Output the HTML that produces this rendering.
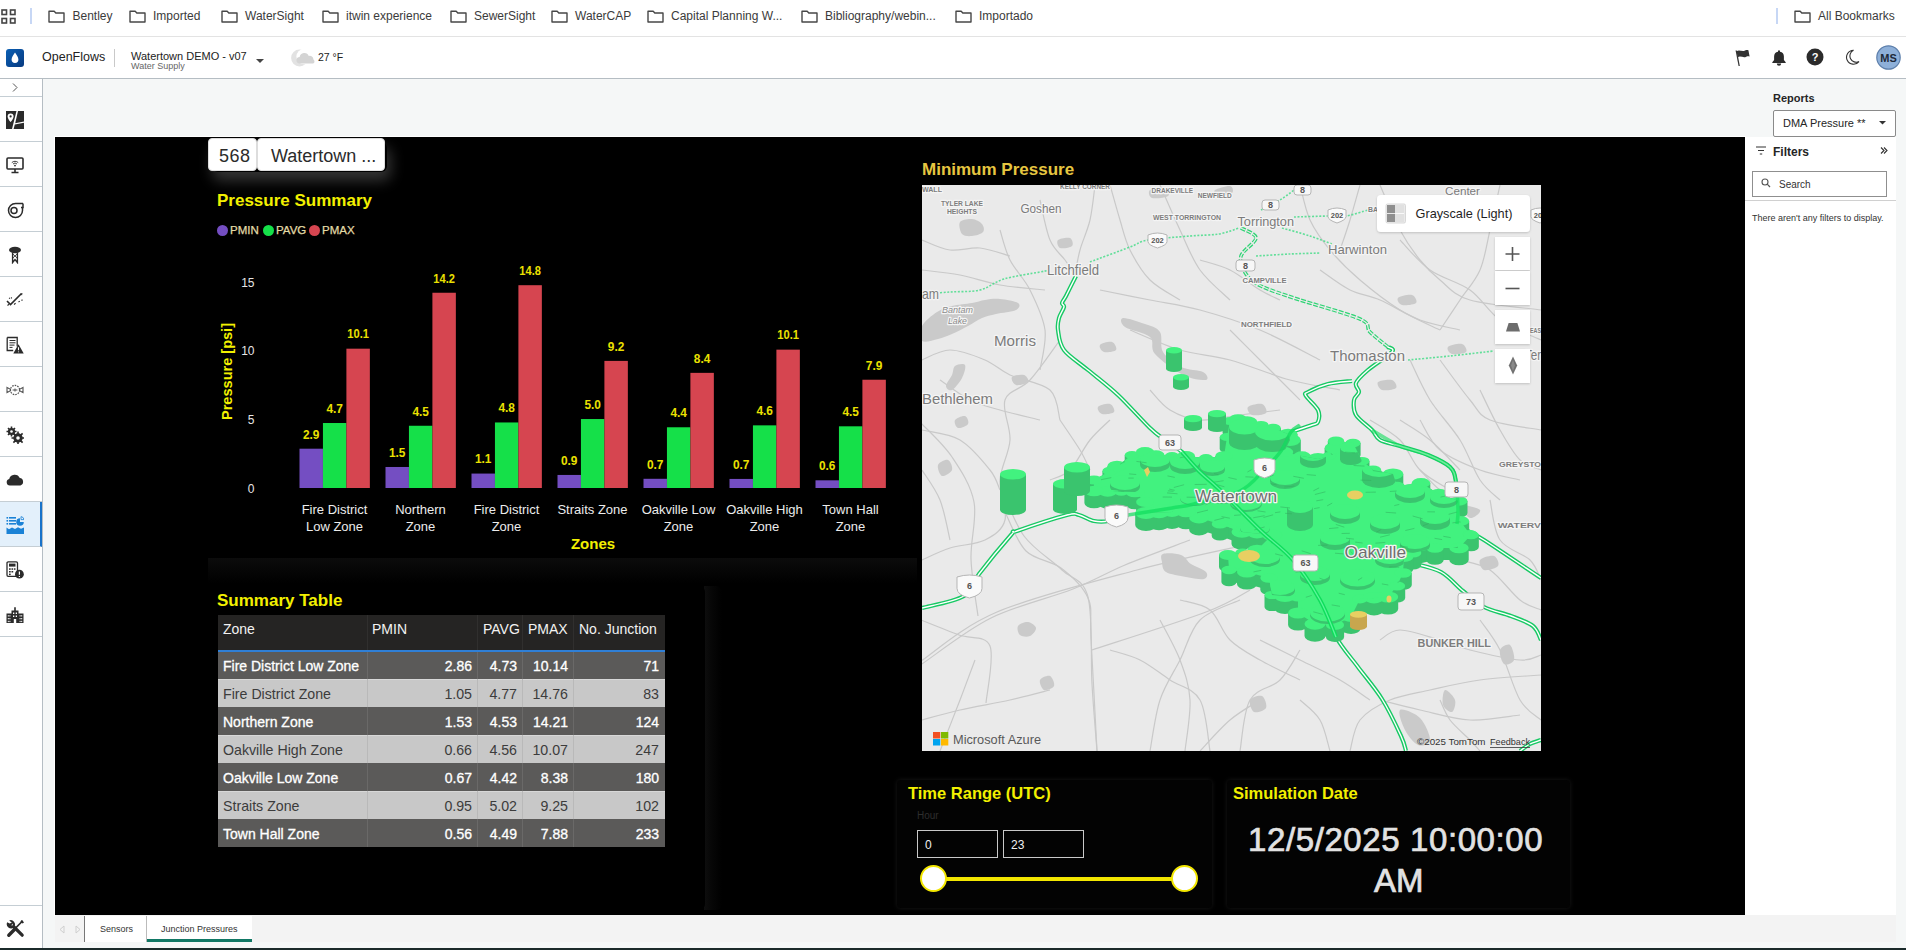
<!DOCTYPE html>
<html><head><meta charset="utf-8">
<style>
*{margin:0;padding:0;box-sizing:border-box}
html,body{width:1906px;height:950px;overflow:hidden;background:#f5f7f7;font-family:"Liberation Sans",sans-serif;position:relative}
.a{position:absolute}
.t{position:absolute;white-space:nowrap;line-height:1}
#bm{left:0;top:0;width:1906px;height:37px;background:#fff;border-bottom:1px solid #e3e3e3}
.bmi{position:absolute;top:0;height:36px;font-size:12px;color:#3b3b3b}
.bmi svg{position:absolute;left:0;top:10px}
.bmi span{position:absolute;left:24px;top:9px;white-space:nowrap}
#hdr{left:0;top:37px;width:1906px;height:42px;background:#fff;border-bottom:1px solid #b5bdc3}
#sb{left:0;top:79px;width:43px;height:871px;background:#fff;border-right:1px solid #b5bdc3}
.sbr{position:absolute;left:0;width:42px;height:45px;border-bottom:1px solid #c5ced4}
.sbr svg{position:absolute;left:6px;top:14px}
#canvas{left:55px;top:137px;width:1690px;height:778px;background:#000}
#filt{left:1745px;top:137px;width:151px;height:778px;background:#fff}
#tabs{left:55px;top:915px;width:1841px;height:27px;background:#f3f3f3}
#botbar{left:0;top:948px;width:1906px;height:2px;background:#1b2a2a}
</style></head><body>

<!-- bookmarks bar -->
<div id="bm" class="a">
  <svg class="a" style="left:1px;top:9px" width="15" height="15" viewBox="0 0 15 15"><g fill="none" stroke="#444" stroke-width="1.6"><rect x="1" y="1" width="4.5" height="4.5"/><rect x="9.5" y="1" width="4.5" height="4.5"/><rect x="1" y="9.5" width="4.5" height="4.5"/><rect x="9.5" y="9.5" width="4.5" height="4.5"/></g></svg>
  <div class="a" style="left:30px;top:8px;width:2px;height:16px;background:#c7d7f5"></div>
  <div class="bmi" style="left:48px"><svg width="17" height="13" viewBox="0 0 17 13"><path d="M1 1.2h5.2l1.6 1.8h8.2v9H1z" fill="none" stroke="#474747" stroke-width="1.4" stroke-linejoin="round"/></svg><span style="left:24.5px">Bentley</span></div>
  <div class="bmi" style="left:129px"><svg width="17" height="13" viewBox="0 0 17 13"><path d="M1 1.2h5.2l1.6 1.8h8.2v9H1z" fill="none" stroke="#474747" stroke-width="1.4" stroke-linejoin="round"/></svg><span>Imported</span></div>
  <div class="bmi" style="left:221px"><svg width="17" height="13" viewBox="0 0 17 13"><path d="M1 1.2h5.2l1.6 1.8h8.2v9H1z" fill="none" stroke="#474747" stroke-width="1.4" stroke-linejoin="round"/></svg><span>WaterSight</span></div>
  <div class="bmi" style="left:322px"><svg width="17" height="13" viewBox="0 0 17 13"><path d="M1 1.2h5.2l1.6 1.8h8.2v9H1z" fill="none" stroke="#474747" stroke-width="1.4" stroke-linejoin="round"/></svg><span>itwin experience</span></div>
  <div class="bmi" style="left:450px"><svg width="17" height="13" viewBox="0 0 17 13"><path d="M1 1.2h5.2l1.6 1.8h8.2v9H1z" fill="none" stroke="#474747" stroke-width="1.4" stroke-linejoin="round"/></svg><span>SewerSight</span></div>
  <div class="bmi" style="left:551px"><svg width="17" height="13" viewBox="0 0 17 13"><path d="M1 1.2h5.2l1.6 1.8h8.2v9H1z" fill="none" stroke="#474747" stroke-width="1.4" stroke-linejoin="round"/></svg><span>WaterCAP</span></div>
  <div class="bmi" style="left:647px"><svg width="17" height="13" viewBox="0 0 17 13"><path d="M1 1.2h5.2l1.6 1.8h8.2v9H1z" fill="none" stroke="#474747" stroke-width="1.4" stroke-linejoin="round"/></svg><span>Capital Planning W...</span></div>
  <div class="bmi" style="left:801px"><svg width="17" height="13" viewBox="0 0 17 13"><path d="M1 1.2h5.2l1.6 1.8h8.2v9H1z" fill="none" stroke="#474747" stroke-width="1.4" stroke-linejoin="round"/></svg><span>Bibliography/webin...</span></div>
  <div class="bmi" style="left:955px"><svg width="17" height="13" viewBox="0 0 17 13"><path d="M1 1.2h5.2l1.6 1.8h8.2v9H1z" fill="none" stroke="#474747" stroke-width="1.4" stroke-linejoin="round"/></svg><span>Importado</span></div>
  <div class="a" style="left:1776px;top:8px;width:2px;height:16px;background:#c7d7f5"></div>
  <div class="bmi" style="left:1794px"><svg width="17" height="13" viewBox="0 0 17 13"><path d="M1 1.2h5.2l1.6 1.8h8.2v9H1z" fill="none" stroke="#474747" stroke-width="1.4" stroke-linejoin="round"/></svg><span>All Bookmarks</span></div>
</div>

<!-- header -->
<div id="hdr" class="a"></div>
<svg class="a" style="left:6px;top:49px" width="18" height="18" viewBox="0 0 18 18"><defs><linearGradient id="lg" x1="0" y1="0" x2="1" y2="1"><stop offset="0" stop-color="#0a5fb4"/><stop offset="1" stop-color="#083a80"/></linearGradient></defs><rect width="18" height="18" rx="3" fill="url(#lg)"/><path d="M9 3.5C7.5 6 5.6 8 5.6 10.6a3.4 3.4 0 0 0 6.8 0C12.4 8 10.5 6 9 3.5z" fill="#fff"/></svg>
<div class="t" style="left:42px;top:51px;font-size:12.5px;color:#222">OpenFlows</div>
<div class="a" style="left:114px;top:49px;width:1px;height:18px;background:#c9c9c9"></div>
<div class="t" style="left:131px;top:51px;font-size:11px;color:#222">Watertown DEMO - v07</div>
<div class="t" style="left:131px;top:62px;font-size:9px;color:#666">Water Supply</div>
<svg class="a" style="left:256px;top:59px" width="8" height="5" viewBox="0 0 8 5"><path d="M0 0h8L4 4z" fill="#444"/></svg>
<svg class="a" style="left:290px;top:48px" width="26" height="20" viewBox="0 0 26 20"><circle cx="9.5" cy="10" r="8.4" fill="#e2e2e2"/><circle cx="14" cy="8.6" r="7.6" fill="#fff"/><path d="M9 15.5a3.3 3.3 0 0 1 .6-6.5a4.8 4.8 0 0 1 9.2-1a3.6 3.6 0 0 1 4.6 3.5a2.2 2.2 0 0 1-.4 4z" fill="#d4d4d4"/></svg>
<div class="t" style="left:318px;top:52px;font-size:10.5px;color:#222">27 °F</div>

<!-- sidebar -->
<div id="sb" class="a"></div>


<!-- header right icons -->
<svg class="a" style="left:1734px;top:48px" width="17" height="19" viewBox="0 0 17 19"><path d="M2.2 2.5L5.2 18" stroke="#333" stroke-width="1.3" fill="none"/><path d="M2.6 3.2C5.5 1.2 8 4.2 11 2.6c1.4-.7 2.6-.6 3.4-.4l1.2 6.2c-1.1-.3-2.2-.3-3.4.3c-3 1.6-5.6-1.4-8.6.6z" fill="#333"/></svg>
<svg class="a" style="left:1771px;top:49px" width="16" height="17" viewBox="0 0 16 17"><path d="M8 1.2a1 1 0 0 1 1 1v.5a4.8 4.8 0 0 1 3.9 4.7v3.6l1.8 2.2v.9H1.3v-.9l1.8-2.2V7.4A4.8 4.8 0 0 1 7 2.7v-.5a1 1 0 0 1 1-1z" fill="#2b2b2b"/><path d="M5.8 14.6a2.2 2.2 0 0 0 4.4 0z" fill="#2b2b2b"/></svg>
<svg class="a" style="left:1806px;top:48px" width="18" height="18" viewBox="0 0 18 18"><circle cx="9" cy="9" r="8.5" fill="#2b2b2b"/><text x="9" y="13.2" text-anchor="middle" font-family="Liberation Sans" font-weight="bold" font-size="11" fill="#fff">?</text></svg>
<svg class="a" style="left:1844px;top:49px" width="16" height="16" viewBox="0 0 16 16"><path d="M9.5 1.2A7 7 0 1 0 15 12.6A6 6 0 0 1 9.5 1.2z" fill="none" stroke="#333" stroke-width="1.1"/></svg>
<svg class="a" style="left:1876px;top:45px" width="25" height="25" viewBox="0 0 25 25"><circle cx="12.5" cy="12.5" r="11.7" fill="#8eb0d9" stroke="#5d7fab" stroke-width="1.2"/><text x="12.5" y="16.6" text-anchor="middle" font-family="Liberation Sans" font-weight="bold" font-size="11" fill="#1d2a3a">MS</text></svg>

<!-- sidebar rows -->
<div class="a" style="left:0;top:79px;width:42px;height:18px;border-bottom:1px solid #c5ced4"></div>
<svg class="a" style="left:11px;top:82px" width="8" height="11" viewBox="0 0 8 11"><path d="M2 1.5l4 4-4 4" fill="none" stroke="#555" stroke-width="1"/></svg>
<div class="sbr" style="top:97px"><svg width="18" height="18" viewBox="0 0 18 18"><path d="M0 0h10.5L6 18H0z M12 0h6v10.5L9.2 12.2z M8.8 13.5L18 11.8V18H7.6z" fill="#2b2b2b"/><path d="M4.6 2.4a3 3 0 0 1 3 3c0 2.2-3 5.6-3 5.6s-3-3.4-3-5.6a3 3 0 0 1 3-3z" fill="#fff"/><circle cx="4.6" cy="5.4" r="1.1" fill="#2b2b2b"/></svg></div>
<div class="sbr" style="top:142px"><svg width="18" height="18" viewBox="0 0 18 18"><rect x="1" y="2" width="16" height="11" rx="1" fill="none" stroke="#2b2b2b" stroke-width="1.6"/><path d="M9 13v3M5.5 16.5h7" stroke="#2b2b2b" stroke-width="1.6"/><path d="M5.8 6.6a4.6 4.6 0 0 1 6.4 0M7 8a2.8 2.8 0 0 1 4 0" fill="none" stroke="#2b2b2b" stroke-width=".9"/><circle cx="9" cy="9.6" r=".9" fill="#2b2b2b"/></svg></div>
<div class="sbr" style="top:187px"><svg width="18" height="18" viewBox="0 0 18 18"><path d="M17 2.5H9.5a7 7 0 1 0 7 7V6.5" fill="none" stroke="#2b2b2b" stroke-width="1.5"/><circle cx="8" cy="9.5" r="3" fill="none" stroke="#2b2b2b" stroke-width="1.5"/><path d="M17 2.5v4h-2" fill="none" stroke="#2b2b2b" stroke-width="1.5"/></svg></div>
<div class="sbr" style="top:232px"><svg width="18" height="18" viewBox="0 0 18 18"><ellipse cx="9" cy="4" rx="6" ry="3.2" fill="#2b2b2b"/><path d="M6.6 6.5v10l2.4-3 2.4 3v-10" fill="none" stroke="#2b2b2b" stroke-width="1.4"/><path d="M7 12l4-4M11 12L7 8" stroke="#2b2b2b" stroke-width=".8"/></svg></div>
<div class="sbr" style="top:277px"><svg width="18" height="18" viewBox="0 0 18 18"><path d="M1 10l3.5 3.5L15 3" fill="none" stroke="#2b2b2b" stroke-width="1.6"/><path d="M14 2.5l2.5-.5-.5 2.5z" fill="#2b2b2b"/><path d="M1.5 14.5l1.5-1.2M5 6.5l.8.8M8 13.5l1.6-1.2M12.5 11l1.3-.9M15.5 9.5l1-.8M3 7l1 .5" stroke="#2b2b2b" stroke-width="1.1"/></svg></div>
<div class="sbr" style="top:322px"><svg width="18" height="18" viewBox="0 0 18 18"><path d="M1.2 1.5h10v9M1.2 1.5v13h6" fill="none" stroke="#2b2b2b" stroke-width="1.3"/><path d="M3.5 4.5h6M3.5 6.8h6M3.5 9.1h5M3.5 11.4h3" stroke="#2b2b2b" stroke-width="1"/><path d="M12.5 8.3l5.2 9.2H7.3z" fill="#2b2b2b"/><path d="M12.5 11.2v3.1M12.5 15.4v.9" stroke="#fff" stroke-width="1.1"/></svg></div>
<div class="sbr" style="top:367px"><svg width="18" height="18" viewBox="0 0 18 18"><circle cx="9" cy="9" r="4.6" fill="none" stroke="#555" stroke-width="1.2" stroke-dasharray="1.6 1"/><path d="M1 6.5l3.5 1.8v1.4L1 11.5zM17 6.5l-3.5 1.8v1.4L17 11.5z" fill="none" stroke="#555" stroke-width="1.1"/><path d="M6.6 9h4.8M9 7.5v3" stroke="#555" stroke-width="1"/></svg></div>
<div class="sbr" style="top:412px"><svg width="18" height="18" viewBox="0 0 18 18"><g fill="#2b2b2b"><circle cx="5.5" cy="5.5" r="3.6"/><circle cx="12" cy="12" r="4.7"/></g><g stroke="#2b2b2b" stroke-width="1.6"><path d="M5.5 0.5v10M0.5 5.5h10M2 2l7 7M9 2l-7 7"/><path d="M12 5.5v13M5.5 12h13M7.4 7.4l9.2 9.2M16.6 7.4l-9.2 9.2"/></g><circle cx="5.5" cy="5.5" r="1.3" fill="#fff"/><circle cx="12" cy="12" r="1.8" fill="#fff"/></svg></div>
<div class="sbr" style="top:457px"><svg width="18" height="18" viewBox="0 0 18 18"><path d="M3.8 14.5a3.3 3.3 0 0 1-.6-6.5a5.6 5.6 0 0 1 10.6-.9a3.8 3.8 0 0 1 .6 7.4z" fill="#2b2b2b"/></svg></div>
<div class="sbr" style="top:502px;background:#e3f0fb;border-right:2px solid #1a73c9"><svg width="18" height="18" viewBox="0 0 18 18"><g fill="#1a82d6"><rect x="0.5" y="1" width="1.6" height="1.6"/><rect x="3" y="1" width="7" height="1.6"/><rect x="0.5" y="4" width="1.6" height="1.6"/><rect x="3" y="4" width="7" height="1.6"/><rect x="0.5" y="7" width="1.6" height="1.6"/><rect x="3" y="7" width="7" height="1.6"/><path d="M14 2.2a3.8 3.8 0 1 0 3.8 3.8H14z"/><path d="M0.5 18V11.6l2.5 1.6 3-1.6 3 1.3 3-1.7 3 1.6 3-1.2V18z"/></g><path d="M15 .6a3.5 3.5 0 0 1 3 3h-3z" fill="none" stroke="#1a82d6" stroke-width=".8"/></svg></div>
<div class="sbr" style="top:547px"><svg width="18" height="18" viewBox="0 0 18 18"><rect x="1" y="0.8" width="10.5" height="14.5" rx="1.2" fill="none" stroke="#2b2b2b" stroke-width="1.3"/><rect x="3" y="2.6" width="6.5" height="3" fill="#2b2b2b"/><g fill="#2b2b2b"><rect x="3" y="7.3" width="1.7" height="1.5"/><rect x="5.5" y="7.3" width="1.7" height="1.5"/><rect x="8" y="7.3" width="1.5" height="1.5"/><rect x="3" y="10" width="1.7" height="1.5"/><rect x="5.5" y="10" width="1.7" height="1.5"/><rect x="3" y="12.6" width="1.7" height="1.5"/></g><circle cx="13.4" cy="13.2" r="4.4" fill="#2b2b2b"/><path d="M13.4 10.6v3.2M13.4 14.9v1" stroke="#fff" stroke-width="1.2"/></svg></div>
<div class="sbr" style="top:592px"><svg width="18" height="18" viewBox="0 0 18 18"><path d="M5.5 4.5h7V17h-7zM0.5 7.5h5V17h-5zM12.5 7.5h5V17h-5zM8.2 1.2h1.6v3.3H8.2z" fill="#2b2b2b"/><g fill="#fff"><rect x="7" y="6.5" width="1.3" height="1.5"/><rect x="9.7" y="6.5" width="1.3" height="1.5"/><rect x="7" y="9.5" width="1.3" height="1.5"/><rect x="9.7" y="9.5" width="1.3" height="1.5"/><rect x="7.8" y="13" width="2.4" height="4"/><rect x="1.8" y="9.2" width="1" height="1.3"/><rect x="3.4" y="9.2" width="1" height="1.3"/><rect x="1.8" y="12" width="1" height="1.3"/><rect x="3.4" y="12" width="1" height="1.3"/><rect x="1.8" y="14.8" width="1" height="1.3"/><rect x="3.4" y="14.8" width="1" height="1.3"/><rect x="13.6" y="9.2" width="1" height="1.3"/><rect x="15.2" y="9.2" width="1" height="1.3"/><rect x="13.6" y="12" width="1" height="1.3"/><rect x="15.2" y="12" width="1" height="1.3"/><rect x="13.6" y="14.8" width="1" height="1.3"/><rect x="15.2" y="14.8" width="1" height="1.3"/></g></svg></div>
<div class="a" style="left:0;top:905px;width:42px;height:1px;background:#c5ced4"></div>
<svg class="a" style="left:6px;top:919px" width="19" height="19" viewBox="0 0 19 19"><path d="M7.5 7.5L16.2 16.2" stroke="#2b2b2b" stroke-width="3.2" stroke-linecap="round"/><path d="M1.2 3.2A4.4 4.4 0 0 0 7.8 8.6L5.6 6.4 6.4 3.6 3.6 4.4z" fill="#2b2b2b"/><path d="M3.2 1.4A4.4 4.4 0 0 1 8.6 7.6L6.6 5.6 5.6 3.6z" fill="#2b2b2b"/><path d="M16.8 1.8L10 8.6" stroke="#2b2b2b" stroke-width="1.6"/><path d="M15.6 1l2.4 2.4-1.4 1.2-2.2-2.2z" fill="#2b2b2b"/><path d="M9.2 9.8L2.8 16.2" stroke="#2b2b2b" stroke-width="3.4" stroke-linecap="round"/></svg>

<!-- reports / filters -->
<div class="t" style="left:1773px;top:93px;font-size:11px;font-weight:bold;color:#252525">Reports</div>
<div class="a" style="left:1773px;top:110px;width:123px;height:27px;background:#fff;border:1px solid #8a8a8a;border-radius:2px"></div>
<div class="t" style="left:1783px;top:118px;font-size:11px;color:#252525">DMA Pressure **</div>
<svg class="a" style="left:1879px;top:121px" width="7" height="4" viewBox="0 0 7 4"><path d="M0 0h7L3.5 3.6z" fill="#333"/></svg>

<!-- main -->
<div class="a" style="left:54px;top:136px;width:1692px;height:780px;background:#fff"></div>
<div id="canvas" class="a"></div>
<div id="filt" class="a"></div>
<div id="tabs" class="a"></div>
<!-- panels / shadows -->
<div class="a" style="left:208px;top:558px;width:709px;height:25px;background:linear-gradient(#0c0c0c,#070707 40%,#000)"></div>
<div class="a" style="left:704px;top:586px;width:18px;height:324px;border-radius:0 6px 6px 0;background:linear-gradient(to right,#0e0e0e,#070707 40%,#000)"></div><div class="a" style="left:210px;top:586px;width:495px;height:324px;border-radius:6px;background:#000"></div>
<!-- time range -->
<div class="a" style="left:897px;top:780px;width:315px;height:128px;background:#030303;border-radius:4px;box-shadow:0 0 5px rgba(30,30,30,.8)"></div>
<div class="t" style="left:908px;top:785px;font-size:16.5px;font-weight:bold;color:#f2f000">Time Range (UTC)</div>
<div class="t" style="left:917px;top:811px;font-size:10px;color:#2e2e2e">Hour</div>
<div class="a" style="left:917px;top:830px;width:81px;height:28px;border:1.5px solid #c9c9c9"></div>
<div class="a" style="left:1003px;top:830px;width:81px;height:28px;border:1.5px solid #c9c9c9"></div>
<div class="t" style="left:925px;top:839px;font-size:12px;color:#f0f0f0">0</div>
<div class="t" style="left:1011px;top:839px;font-size:12px;color:#f0f0f0">23</div>
<div class="a" style="left:934px;top:877px;width:251px;height:4px;background:#f2e600"></div>
<div class="a" style="left:920px;top:865px;width:27px;height:27px;border-radius:50%;background:#fff;border:2.5px solid #f2e600"></div>
<div class="a" style="left:1171px;top:865px;width:27px;height:27px;border-radius:50%;background:#fff;border:2.5px solid #f2e600"></div>
<!-- simulation date -->
<div class="a" style="left:1227px;top:780px;width:343px;height:128px;background:#030303;border-radius:4px;box-shadow:0 0 5px rgba(30,30,30,.8)"></div>
<div class="t" style="left:1233px;top:785px;font-size:16.5px;font-weight:bold;color:#f2f000">Simulation Date</div>
<div class="t" style="left:1248px;top:823px;font-size:33px;color:#e2e2e2;-webkit-text-stroke:0.7px #e2e2e2;letter-spacing:0.6px">12/5/2025 10:00:00</div>
<div class="t" style="left:1374px;top:864px;font-size:33px;color:#e2e2e2;-webkit-text-stroke:0.7px #e2e2e2">AM</div>
<!-- filters panel -->
<svg class="a" style="left:1756px;top:146px" width="10" height="9" viewBox="0 0 10 9"><path d="M0 1h10M2 4.5h6M3.8 8h2.4" stroke="#333" stroke-width="1.2"/></svg>
<div class="t" style="left:1773px;top:146px;font-size:12px;font-weight:bold;color:#252525">Filters</div>
<svg class="a" style="left:1880px;top:147px" width="8" height="7" viewBox="0 0 8 7"><path d="M1 .5l3 3-3 3M4 .5l3 3-3 3" fill="none" stroke="#333" stroke-width="1.1"/></svg>
<div class="a" style="left:1752px;top:171px;width:135px;height:26px;border:1px solid #8f8f8f;background:#fff"></div>
<svg class="a" style="left:1761px;top:178px" width="10" height="10" viewBox="0 0 10 10"><circle cx="4" cy="4" r="3" fill="none" stroke="#555" stroke-width="1.1"/><path d="M6.2 6.2L9 9" stroke="#555" stroke-width="1.2"/></svg>
<div class="t" style="left:1779px;top:180px;font-size:10px;color:#333">Search</div>
<div class="a" style="left:1745px;top:200px;width:151px;height:1px;background:#d0d0d0"></div>
<div class="t" style="left:1752px;top:214px;font-size:9px;color:#333">There aren't any filters to display.</div>
<!-- tabs -->
<div class="a" style="left:84px;top:916px;width:1px;height:26px;background:#777"></div>
<svg class="a" style="left:59px;top:925px" width="6" height="9" viewBox="0 0 6 9"><path d="M5 1L1 4.5 5 8z" fill="none" stroke="#cfcfcf" stroke-width="1"/></svg>
<svg class="a" style="left:75px;top:925px" width="6" height="9" viewBox="0 0 6 9"><path d="M1 1l4 3.5L1 8z" fill="none" stroke="#cfcfcf" stroke-width="1"/></svg>
<div class="a" style="left:85px;top:916px;width:61px;height:26px;background:#fff"></div>
<div class="t" style="left:100px;top:925px;font-size:9px;color:#333">Sensors</div>
<div class="a" style="left:146px;top:916px;width:1px;height:26px;background:#bbb"></div>
<div class="a" style="left:147px;top:916px;width:105px;height:26px;background:#fff;border-bottom:3px solid #117865"></div>
<div class="t" style="left:161px;top:925px;font-size:9px;color:#333">Junction Pressures</div>

<!--BEGIN TABLE-->
<!-- table -->
<div class="t" style="left:217px;top:592px;font-size:17px;font-weight:bold;color:#f2f000">Summary Table</div>
<div class="a" style="left:218px;top:615px;width:447px;height:35px;background:#252423"></div>
<div class="a" style="left:218px;top:650px;width:447px;height:2px;background:#2f7fd6"></div>
<div class="t" style="left:223px;top:622px;font-size:14px;color:#f2f2f2">Zone</div>
<div class="t" style="left:372px;top:622px;font-size:14px;color:#f2f2f2">PMIN</div>
<div class="t" style="left:483px;top:622px;font-size:14px;color:#f2f2f2">PAVG</div>
<div class="t" style="left:528px;top:622px;font-size:14px;color:#f2f2f2">PMAX</div>
<div class="t" style="left:579px;top:622px;font-size:14px;color:#f2f2f2">No. Junction</div>
<div class="a" style="left:367px;top:615px;width:1px;height:35px;background:#302f2e"></div>
<div class="a" style="left:477px;top:615px;width:1px;height:35px;background:#302f2e"></div>
<div class="a" style="left:522px;top:615px;width:1px;height:35px;background:#302f2e"></div>
<div class="a" style="left:573px;top:615px;width:1px;height:35px;background:#302f2e"></div>
<div class="a" style="left:218px;top:652px;width:447px;height:27px;background:#5b5a59;border-top:1px solid #5b5a59"></div>
<div class="a" style="left:367px;top:652px;width:1px;height:27px;background:#6a6968"></div>
<div class="a" style="left:477px;top:652px;width:1px;height:27px;background:#6a6968"></div>
<div class="a" style="left:522px;top:652px;width:1px;height:27px;background:#6a6968"></div>
<div class="a" style="left:573px;top:652px;width:1px;height:27px;background:#6a6968"></div>
<div class="t" style="left:223px;top:659.0px;font-size:14px;-webkit-text-stroke:0.3px #fff;color:#ffffff">Fire District Low Zone</div>
<div class="t" style="right:1434px;top:659.0px;font-size:14px;-webkit-text-stroke:0.3px #fff;color:#ffffff">2.86</div>
<div class="t" style="right:1389px;top:659.0px;font-size:14px;-webkit-text-stroke:0.3px #fff;color:#ffffff">4.73</div>
<div class="t" style="right:1338px;top:659.0px;font-size:14px;-webkit-text-stroke:0.3px #fff;color:#ffffff">10.14</div>
<div class="t" style="right:1247px;top:659.0px;font-size:14px;-webkit-text-stroke:0.3px #fff;color:#ffffff">71</div>
<div class="a" style="left:218px;top:679px;width:447px;height:28px;background:#c8c8c8;border-top:1px solid #d8d8d8"></div>
<div class="a" style="left:367px;top:679px;width:1px;height:28px;background:#b9b9b9"></div>
<div class="a" style="left:477px;top:679px;width:1px;height:28px;background:#b9b9b9"></div>
<div class="a" style="left:522px;top:679px;width:1px;height:28px;background:#b9b9b9"></div>
<div class="a" style="left:573px;top:679px;width:1px;height:28px;background:#b9b9b9"></div>
<div class="t" style="left:223px;top:686.5px;font-size:14.2px;color:#3c3c3c">Fire District Zone</div>
<div class="t" style="right:1434px;top:686.5px;font-size:14.2px;color:#3c3c3c">1.05</div>
<div class="t" style="right:1389px;top:686.5px;font-size:14.2px;color:#3c3c3c">4.77</div>
<div class="t" style="right:1338px;top:686.5px;font-size:14.2px;color:#3c3c3c">14.76</div>
<div class="t" style="right:1247px;top:686.5px;font-size:14.2px;color:#3c3c3c">83</div>
<div class="a" style="left:218px;top:707px;width:447px;height:28px;background:#5b5a59;border-top:1px solid #5b5a59"></div>
<div class="a" style="left:367px;top:707px;width:1px;height:28px;background:#6a6968"></div>
<div class="a" style="left:477px;top:707px;width:1px;height:28px;background:#6a6968"></div>
<div class="a" style="left:522px;top:707px;width:1px;height:28px;background:#6a6968"></div>
<div class="a" style="left:573px;top:707px;width:1px;height:28px;background:#6a6968"></div>
<div class="t" style="left:223px;top:714.5px;font-size:14px;-webkit-text-stroke:0.3px #fff;color:#ffffff">Northern Zone</div>
<div class="t" style="right:1434px;top:714.5px;font-size:14px;-webkit-text-stroke:0.3px #fff;color:#ffffff">1.53</div>
<div class="t" style="right:1389px;top:714.5px;font-size:14px;-webkit-text-stroke:0.3px #fff;color:#ffffff">4.53</div>
<div class="t" style="right:1338px;top:714.5px;font-size:14px;-webkit-text-stroke:0.3px #fff;color:#ffffff">14.21</div>
<div class="t" style="right:1247px;top:714.5px;font-size:14px;-webkit-text-stroke:0.3px #fff;color:#ffffff">124</div>
<div class="a" style="left:218px;top:735px;width:447px;height:28px;background:#c8c8c8;border-top:1px solid #d8d8d8"></div>
<div class="a" style="left:367px;top:735px;width:1px;height:28px;background:#b9b9b9"></div>
<div class="a" style="left:477px;top:735px;width:1px;height:28px;background:#b9b9b9"></div>
<div class="a" style="left:522px;top:735px;width:1px;height:28px;background:#b9b9b9"></div>
<div class="a" style="left:573px;top:735px;width:1px;height:28px;background:#b9b9b9"></div>
<div class="t" style="left:223px;top:742.5px;font-size:14.2px;color:#3c3c3c">Oakville High Zone</div>
<div class="t" style="right:1434px;top:742.5px;font-size:14.2px;color:#3c3c3c">0.66</div>
<div class="t" style="right:1389px;top:742.5px;font-size:14.2px;color:#3c3c3c">4.56</div>
<div class="t" style="right:1338px;top:742.5px;font-size:14.2px;color:#3c3c3c">10.07</div>
<div class="t" style="right:1247px;top:742.5px;font-size:14.2px;color:#3c3c3c">247</div>
<div class="a" style="left:218px;top:763px;width:447px;height:28px;background:#5b5a59;border-top:1px solid #5b5a59"></div>
<div class="a" style="left:367px;top:763px;width:1px;height:28px;background:#6a6968"></div>
<div class="a" style="left:477px;top:763px;width:1px;height:28px;background:#6a6968"></div>
<div class="a" style="left:522px;top:763px;width:1px;height:28px;background:#6a6968"></div>
<div class="a" style="left:573px;top:763px;width:1px;height:28px;background:#6a6968"></div>
<div class="t" style="left:223px;top:770.5px;font-size:14px;-webkit-text-stroke:0.3px #fff;color:#ffffff">Oakville Low Zone</div>
<div class="t" style="right:1434px;top:770.5px;font-size:14px;-webkit-text-stroke:0.3px #fff;color:#ffffff">0.67</div>
<div class="t" style="right:1389px;top:770.5px;font-size:14px;-webkit-text-stroke:0.3px #fff;color:#ffffff">4.42</div>
<div class="t" style="right:1338px;top:770.5px;font-size:14px;-webkit-text-stroke:0.3px #fff;color:#ffffff">8.38</div>
<div class="t" style="right:1247px;top:770.5px;font-size:14px;-webkit-text-stroke:0.3px #fff;color:#ffffff">180</div>
<div class="a" style="left:218px;top:791px;width:447px;height:28px;background:#c8c8c8;border-top:1px solid #d8d8d8"></div>
<div class="a" style="left:367px;top:791px;width:1px;height:28px;background:#b9b9b9"></div>
<div class="a" style="left:477px;top:791px;width:1px;height:28px;background:#b9b9b9"></div>
<div class="a" style="left:522px;top:791px;width:1px;height:28px;background:#b9b9b9"></div>
<div class="a" style="left:573px;top:791px;width:1px;height:28px;background:#b9b9b9"></div>
<div class="t" style="left:223px;top:798.5px;font-size:14.2px;color:#3c3c3c">Straits Zone</div>
<div class="t" style="right:1434px;top:798.5px;font-size:14.2px;color:#3c3c3c">0.95</div>
<div class="t" style="right:1389px;top:798.5px;font-size:14.2px;color:#3c3c3c">5.02</div>
<div class="t" style="right:1338px;top:798.5px;font-size:14.2px;color:#3c3c3c">9.25</div>
<div class="t" style="right:1247px;top:798.5px;font-size:14.2px;color:#3c3c3c">102</div>
<div class="a" style="left:218px;top:819px;width:447px;height:28px;background:#5b5a59;border-top:1px solid #5b5a59"></div>
<div class="a" style="left:367px;top:819px;width:1px;height:28px;background:#6a6968"></div>
<div class="a" style="left:477px;top:819px;width:1px;height:28px;background:#6a6968"></div>
<div class="a" style="left:522px;top:819px;width:1px;height:28px;background:#6a6968"></div>
<div class="a" style="left:573px;top:819px;width:1px;height:28px;background:#6a6968"></div>
<div class="t" style="left:223px;top:826.5px;font-size:14px;-webkit-text-stroke:0.3px #fff;color:#ffffff">Town Hall Zone</div>
<div class="t" style="right:1434px;top:826.5px;font-size:14px;-webkit-text-stroke:0.3px #fff;color:#ffffff">0.56</div>
<div class="t" style="right:1389px;top:826.5px;font-size:14px;-webkit-text-stroke:0.3px #fff;color:#ffffff">4.49</div>
<div class="t" style="right:1338px;top:826.5px;font-size:14px;-webkit-text-stroke:0.3px #fff;color:#ffffff">7.88</div>
<div class="t" style="right:1247px;top:826.5px;font-size:14px;-webkit-text-stroke:0.3px #fff;color:#ffffff">233</div>
<!--END TABLE-->
<!-- canvas items -->
<div class="a" style="left:212px;top:142px;width:175px;height:30px;border-radius:6px;box-shadow:2px 7px 14px 2px rgba(255,255,255,0.2)"></div>
<div class="a" style="left:208px;top:138px;width:49px;height:33px;background:#fff;border-radius:4px;border:1px solid #ddd"></div>
<div class="a" style="left:257px;top:138px;width:128px;height:33px;background:#fff;border-radius:4px;border:1px solid #ddd"></div>
<div class="t" style="left:219px;top:147px;font-size:18px;color:#2b2b2b;letter-spacing:0.5px">568</div>
<div class="t" style="left:271px;top:147px;font-size:18px;color:#2b2b2b">Watertown ...</div>
<div class="t" style="left:217px;top:192px;font-size:17px;font-weight:bold;color:#f2f000">Pressure Summary</div>
<div class="a" style="left:217px;top:225px;width:11px;height:11px;border-radius:50%;background:#744ec2"></div>
<div class="t" style="left:230px;top:225px;font-size:11.5px;color:#e2dba6;-webkit-text-stroke:0.25px #e2dba6">PMIN</div>
<div class="a" style="left:263px;top:225px;width:11px;height:11px;border-radius:50%;background:#15e049"></div>
<div class="t" style="left:276px;top:225px;font-size:11.5px;color:#e2dba6;-webkit-text-stroke:0.25px #e2dba6">PAVG</div>
<div class="a" style="left:309px;top:225px;width:11px;height:11px;border-radius:50%;background:#d64550"></div>
<div class="t" style="left:322px;top:225px;font-size:11.5px;color:#e2dba6;-webkit-text-stroke:0.25px #e2dba6">PMAX</div>

<!--BEGIN CHART-->
<svg class="a" style="left:0;top:0" width="1906" height="950" viewBox="0 0 1906 950" font-family="Liberation Sans">
<text x="254.5" y="286.9" text-anchor="end" font-size="12" fill="#e6e6e6">15</text>
<text x="254.5" y="354.6" text-anchor="end" font-size="12" fill="#e6e6e6">10</text>
<text x="254.5" y="423.8" text-anchor="end" font-size="12" fill="#e6e6e6">5</text>
<text x="254.5" y="492.7" text-anchor="end" font-size="12" fill="#e6e6e6">0</text>
<text transform="translate(231.5,371.5) rotate(-90)" text-anchor="middle" font-size="14.5" font-weight="bold" fill="#f2f000" textLength="97" lengthAdjust="spacingAndGlyphs">Pressure [psi]</text>
<rect x="299.50" y="448.70" width="23.45" height="39.30" fill="#744ec2"/>
<text x="311.23" y="438.50" text-anchor="middle" font-size="13" font-weight="bold" fill="#ebe100" textLength="16.5" lengthAdjust="spacingAndGlyphs">2.9</text>
<rect x="322.95" y="423.01" width="23.45" height="64.99" fill="#15e049"/>
<text x="334.68" y="412.81" text-anchor="middle" font-size="13" font-weight="bold" fill="#ebe100" textLength="16.5" lengthAdjust="spacingAndGlyphs">4.7</text>
<rect x="346.40" y="348.68" width="23.45" height="139.32" fill="#d64550"/>
<text x="358.12" y="338.48" text-anchor="middle" font-size="13" font-weight="bold" fill="#ebe100" textLength="21.6" lengthAdjust="spacingAndGlyphs">10.1</text>
<text x="334.5" y="514" text-anchor="middle" font-size="13" fill="#ececec">Fire District</text>
<text x="334.5" y="531" text-anchor="middle" font-size="13" fill="#ececec">Low Zone</text>
<rect x="385.50" y="466.98" width="23.45" height="21.02" fill="#744ec2"/>
<text x="397.23" y="456.78" text-anchor="middle" font-size="13" font-weight="bold" fill="#ebe100" textLength="16.5" lengthAdjust="spacingAndGlyphs">1.5</text>
<rect x="408.95" y="425.76" width="23.45" height="62.24" fill="#15e049"/>
<text x="420.68" y="415.56" text-anchor="middle" font-size="13" font-weight="bold" fill="#ebe100" textLength="16.5" lengthAdjust="spacingAndGlyphs">4.5</text>
<rect x="432.40" y="292.75" width="23.45" height="195.25" fill="#d64550"/>
<text x="444.12" y="282.55" text-anchor="middle" font-size="13" font-weight="bold" fill="#ebe100" textLength="21.6" lengthAdjust="spacingAndGlyphs">14.2</text>
<text x="420.5" y="514" text-anchor="middle" font-size="13" fill="#ececec">Northern</text>
<text x="420.5" y="531" text-anchor="middle" font-size="13" fill="#ececec">Zone</text>
<rect x="471.50" y="473.57" width="23.45" height="14.43" fill="#744ec2"/>
<text x="483.23" y="463.37" text-anchor="middle" font-size="13" font-weight="bold" fill="#ebe100" textLength="16.5" lengthAdjust="spacingAndGlyphs">1.1</text>
<rect x="494.95" y="422.46" width="23.45" height="65.54" fill="#15e049"/>
<text x="506.68" y="412.26" text-anchor="middle" font-size="13" font-weight="bold" fill="#ebe100" textLength="16.5" lengthAdjust="spacingAndGlyphs">4.8</text>
<rect x="518.40" y="285.20" width="23.45" height="202.80" fill="#d64550"/>
<text x="530.12" y="275.00" text-anchor="middle" font-size="13" font-weight="bold" fill="#ebe100" textLength="21.6" lengthAdjust="spacingAndGlyphs">14.8</text>
<text x="506.5" y="514" text-anchor="middle" font-size="13" fill="#ececec">Fire District</text>
<text x="506.5" y="531" text-anchor="middle" font-size="13" fill="#ececec">Zone</text>
<rect x="557.50" y="474.95" width="23.45" height="13.05" fill="#744ec2"/>
<text x="569.23" y="464.75" text-anchor="middle" font-size="13" font-weight="bold" fill="#ebe100" textLength="16.5" lengthAdjust="spacingAndGlyphs">0.9</text>
<rect x="580.95" y="419.03" width="23.45" height="68.97" fill="#15e049"/>
<text x="592.68" y="408.83" text-anchor="middle" font-size="13" font-weight="bold" fill="#ebe100" textLength="16.5" lengthAdjust="spacingAndGlyphs">5.0</text>
<rect x="604.40" y="360.90" width="23.45" height="127.10" fill="#d64550"/>
<text x="616.12" y="350.70" text-anchor="middle" font-size="13" font-weight="bold" fill="#ebe100" textLength="16.5" lengthAdjust="spacingAndGlyphs">9.2</text>
<text x="592.5" y="514" text-anchor="middle" font-size="13" fill="#ececec">Straits Zone</text>
<rect x="643.50" y="478.79" width="23.45" height="9.21" fill="#744ec2"/>
<text x="655.23" y="468.59" text-anchor="middle" font-size="13" font-weight="bold" fill="#ebe100" textLength="16.5" lengthAdjust="spacingAndGlyphs">0.7</text>
<rect x="666.95" y="427.27" width="23.45" height="60.73" fill="#15e049"/>
<text x="678.68" y="417.07" text-anchor="middle" font-size="13" font-weight="bold" fill="#ebe100" textLength="16.5" lengthAdjust="spacingAndGlyphs">4.4</text>
<rect x="690.40" y="372.86" width="23.45" height="115.14" fill="#d64550"/>
<text x="702.12" y="362.66" text-anchor="middle" font-size="13" font-weight="bold" fill="#ebe100" textLength="16.5" lengthAdjust="spacingAndGlyphs">8.4</text>
<text x="678.5" y="514" text-anchor="middle" font-size="13" fill="#ececec">Oakville Low</text>
<text x="678.5" y="531" text-anchor="middle" font-size="13" fill="#ececec">Zone</text>
<rect x="729.50" y="478.93" width="23.45" height="9.07" fill="#744ec2"/>
<text x="741.23" y="468.73" text-anchor="middle" font-size="13" font-weight="bold" fill="#ebe100" textLength="16.5" lengthAdjust="spacingAndGlyphs">0.7</text>
<rect x="752.95" y="425.35" width="23.45" height="62.65" fill="#15e049"/>
<text x="764.68" y="415.15" text-anchor="middle" font-size="13" font-weight="bold" fill="#ebe100" textLength="16.5" lengthAdjust="spacingAndGlyphs">4.6</text>
<rect x="776.40" y="349.64" width="23.45" height="138.36" fill="#d64550"/>
<text x="788.12" y="339.44" text-anchor="middle" font-size="13" font-weight="bold" fill="#ebe100" textLength="21.6" lengthAdjust="spacingAndGlyphs">10.1</text>
<text x="764.5" y="514" text-anchor="middle" font-size="13" fill="#ececec">Oakville High</text>
<text x="764.5" y="531" text-anchor="middle" font-size="13" fill="#ececec">Zone</text>
<rect x="815.50" y="480.31" width="23.45" height="7.69" fill="#744ec2"/>
<text x="827.23" y="470.11" text-anchor="middle" font-size="13" font-weight="bold" fill="#ebe100" textLength="16.5" lengthAdjust="spacingAndGlyphs">0.6</text>
<rect x="838.95" y="426.31" width="23.45" height="61.69" fill="#15e049"/>
<text x="850.68" y="416.11" text-anchor="middle" font-size="13" font-weight="bold" fill="#ebe100" textLength="16.5" lengthAdjust="spacingAndGlyphs">4.5</text>
<rect x="862.40" y="379.73" width="23.45" height="108.27" fill="#d64550"/>
<text x="874.12" y="369.53" text-anchor="middle" font-size="13" font-weight="bold" fill="#ebe100" textLength="16.5" lengthAdjust="spacingAndGlyphs">7.9</text>
<text x="850.5" y="514" text-anchor="middle" font-size="13" fill="#ececec">Town Hall</text>
<text x="850.5" y="531" text-anchor="middle" font-size="13" fill="#ececec">Zone</text>
<text x="593" y="549" text-anchor="middle" font-size="15" font-weight="bold" fill="#f2f000">Zones</text>
</svg>
<!--END CHART-->

<div id="botbar" class="a"></div>

<!--BEGIN MAP-->
<div class="t" style="left:922px;top:161px;font-size:17px;font-weight:bold;color:#e6c640">Minimum Pressure</div>
<svg class="a" style="left:922px;top:185px" width="619" height="566" viewBox="922 185 619 566" font-family="Liberation Sans">
<rect x="922" y="185" width="619" height="566" fill="#eaeaea"/>
<path d="M922.0 664.0 C933.5 656.3 965.8 630.5 991.0 618.0 C1016.2 605.5 1050.7 597.8 1073.0 589.0 C1095.3 580.2 1105.5 573.2 1125.0 565.0 C1144.5 556.8 1179.2 544.2 1190.0 540.0" fill="none" stroke="#c9c9c9" stroke-width="1.2"/>
<path d="M1005.0 512.0 C1008.5 518.5 1016.7 541.7 1026.0 551.0 C1035.3 560.3 1050.7 560.2 1061.0 568.0 C1071.3 575.8 1083.0 586.2 1088.0 598.0 C1093.0 609.8 1089.5 613.5 1091.0 639.0 C1092.5 664.5 1096.0 732.3 1097.0 751.0" fill="none" stroke="#c9c9c9" stroke-width="1.2"/>
<path d="M922.0 560.0 C926.7 558.0 939.5 551.3 950.0 548.0 C960.5 544.7 975.8 544.7 985.0 540.0 C994.2 535.3 1002.5 530.0 1005.0 520.0 C1007.5 510.0 999.2 493.3 1000.0 480.0 C1000.8 466.7 1009.2 453.3 1010.0 440.0 C1010.8 426.7 1001.7 410.0 1005.0 400.0 C1008.3 390.0 1020.8 390.0 1030.0 380.0 C1039.2 370.0 1055.0 346.7 1060.0 340.0" fill="none" stroke="#c9c9c9" stroke-width="1.2"/>
<path d="M922.0 430.0 C928.3 431.7 948.7 433.3 960.0 440.0 C971.3 446.7 983.3 461.7 990.0 470.0 C996.7 478.3 998.3 486.7 1000.0 490.0" fill="none" stroke="#c9c9c9" stroke-width="1.2"/>
<path d="M940.0 751.0 C943.3 742.5 954.2 715.2 960.0 700.0 C965.8 684.8 972.5 666.7 975.0 660.0" fill="none" stroke="#c9c9c9" stroke-width="1.2"/>
<path d="M1150.0 751.0 C1151.7 742.5 1155.0 715.2 1160.0 700.0 C1165.0 684.8 1173.3 673.3 1180.0 660.0 C1186.7 646.7 1190.0 630.0 1200.0 620.0 C1210.0 610.0 1233.3 603.3 1240.0 600.0" fill="none" stroke="#c9c9c9" stroke-width="1.2"/>
<path d="M1240.0 751.0 C1241.7 742.5 1243.3 711.8 1250.0 700.0 C1256.7 688.2 1271.7 688.3 1280.0 680.0 C1288.3 671.7 1296.7 655.0 1300.0 650.0" fill="none" stroke="#c9c9c9" stroke-width="1.2"/>
<path d="M1350.0 751.0 C1351.7 745.8 1353.3 728.5 1360.0 720.0 C1366.7 711.5 1378.3 705.0 1390.0 700.0 C1401.7 695.0 1415.0 693.3 1430.0 690.0 C1445.0 686.7 1461.5 682.5 1480.0 680.0 C1498.5 677.5 1530.8 675.8 1541.0 675.0" fill="none" stroke="#c9c9c9" stroke-width="1.2"/>
<path d="M1380.0 640.0 C1383.3 638.3 1390.0 630.0 1400.0 630.0 C1410.0 630.0 1428.3 636.7 1440.0 640.0 C1451.7 643.3 1456.7 646.7 1470.0 650.0 C1483.3 653.3 1508.2 659.2 1520.0 660.0 C1531.8 660.8 1537.5 655.8 1541.0 655.0" fill="none" stroke="#c9c9c9" stroke-width="1.2"/>
<path d="M1460.0 560.0 C1465.0 561.7 1480.0 563.3 1490.0 570.0 C1500.0 576.7 1511.5 593.3 1520.0 600.0 C1528.5 606.7 1537.5 608.3 1541.0 610.0" fill="none" stroke="#c9c9c9" stroke-width="1.2"/>
<path d="M1490.0 500.0 C1491.7 506.7 1493.3 530.0 1500.0 540.0 C1506.7 550.0 1523.2 553.3 1530.0 560.0 C1536.8 566.7 1539.2 576.7 1541.0 580.0" fill="none" stroke="#c9c9c9" stroke-width="1.2"/>
<path d="M1480.0 390.0 C1483.3 396.7 1493.3 418.3 1500.0 430.0 C1506.7 441.7 1513.2 453.3 1520.0 460.0 C1526.8 466.7 1537.5 468.3 1541.0 470.0" fill="none" stroke="#c9c9c9" stroke-width="1.2"/>
<path d="M1410.0 360.0 C1413.3 366.7 1421.7 386.7 1430.0 400.0 C1438.3 413.3 1451.7 426.7 1460.0 440.0 C1468.3 453.3 1473.3 470.0 1480.0 480.0 C1486.7 490.0 1496.7 496.7 1500.0 500.0" fill="none" stroke="#c9c9c9" stroke-width="1.2"/>
<path d="M1400.0 420.0 C1405.0 423.3 1420.0 431.7 1430.0 440.0 C1440.0 448.3 1455.0 465.0 1460.0 470.0" fill="none" stroke="#c9c9c9" stroke-width="1.2"/>
<path d="M1440.0 360.0 C1445.0 366.7 1461.7 390.0 1470.0 400.0 C1478.3 410.0 1478.2 415.0 1490.0 420.0 C1501.8 425.0 1532.5 428.3 1541.0 430.0" fill="none" stroke="#c9c9c9" stroke-width="1.2"/>
<path d="M1370.0 420.0 C1375.0 423.3 1391.7 431.7 1400.0 440.0 C1408.3 448.3 1411.7 461.7 1420.0 470.0 C1428.3 478.3 1445.0 486.7 1450.0 490.0" fill="none" stroke="#c9c9c9" stroke-width="1.2"/>
<path d="M922.0 360.0 C926.7 358.3 939.5 350.0 950.0 350.0 C960.5 350.0 975.0 355.8 985.0 360.0 C995.0 364.2 999.2 370.0 1010.0 375.0 C1020.8 380.0 1041.7 382.5 1050.0 390.0 C1058.3 397.5 1058.3 415.0 1060.0 420.0" fill="none" stroke="#c9c9c9" stroke-width="1.2"/>
<path d="M1040.0 200.0 C1041.7 206.7 1045.8 230.0 1050.0 240.0 C1054.2 250.0 1060.8 254.2 1065.0 260.0 C1069.2 265.8 1073.3 272.5 1075.0 275.0" fill="none" stroke="#c9c9c9" stroke-width="1.2"/>
<path d="M1095.0 185.0 C1094.2 190.8 1092.5 209.2 1090.0 220.0 C1087.5 230.8 1082.5 240.8 1080.0 250.0 C1077.5 259.2 1075.8 270.8 1075.0 275.0" fill="none" stroke="#c9c9c9" stroke-width="1.2"/>
<path d="M1000.0 230.0 C1001.7 235.0 1005.0 250.0 1010.0 260.0 C1015.0 270.0 1024.2 278.3 1030.0 290.0 C1035.8 301.7 1043.3 316.7 1045.0 330.0 C1046.7 343.3 1040.8 363.3 1040.0 370.0" fill="none" stroke="#c9c9c9" stroke-width="1.2"/>
<path d="M922.0 270.0 C928.3 270.8 947.0 272.5 960.0 275.0 C973.0 277.5 985.8 282.5 1000.0 285.0 C1014.2 287.5 1037.5 289.2 1045.0 290.0" fill="none" stroke="#c9c9c9" stroke-width="1.2"/>
<path d="M1100.0 290.0 C1108.3 291.7 1133.3 296.7 1150.0 300.0 C1166.7 303.3 1181.7 305.0 1200.0 310.0 C1218.3 315.0 1240.0 321.7 1260.0 330.0 C1280.0 338.3 1310.0 355.0 1320.0 360.0" fill="none" stroke="#c9c9c9" stroke-width="1.2"/>
<path d="M1130.0 330.0 C1138.3 333.3 1163.3 345.0 1180.0 350.0 C1196.7 355.0 1211.7 355.0 1230.0 360.0 C1248.3 365.0 1271.7 375.0 1290.0 380.0 C1308.3 385.0 1331.7 388.3 1340.0 390.0" fill="none" stroke="#c9c9c9" stroke-width="1.2"/>
<path d="M1200.0 260.0 C1205.0 261.7 1220.0 265.0 1230.0 270.0 C1240.0 275.0 1251.7 285.0 1260.0 290.0 C1268.3 295.0 1276.7 298.3 1280.0 300.0" fill="none" stroke="#c9c9c9" stroke-width="1.2"/>
<path d="M1300.0 185.0 C1301.7 190.8 1305.0 209.2 1310.0 220.0 C1315.0 230.8 1321.7 240.0 1330.0 250.0 C1338.3 260.0 1348.3 270.0 1360.0 280.0 C1371.7 290.0 1386.7 301.7 1400.0 310.0 C1413.3 318.3 1433.3 326.7 1440.0 330.0" fill="none" stroke="#c9c9c9" stroke-width="1.2"/>
<path d="M1400.0 240.0 C1405.0 245.0 1418.3 261.7 1430.0 270.0 C1441.7 278.3 1458.3 281.7 1470.0 290.0 C1481.7 298.3 1488.2 311.7 1500.0 320.0 C1511.8 328.3 1534.2 336.7 1541.0 340.0" fill="none" stroke="#c9c9c9" stroke-width="1.2"/>
<path d="M1150.0 390.0 C1153.3 393.3 1161.7 405.0 1170.0 410.0 C1178.3 415.0 1188.3 419.2 1200.0 420.0 C1211.7 420.8 1226.7 416.7 1240.0 415.0 C1253.3 413.3 1273.3 410.8 1280.0 410.0" fill="none" stroke="#c9c9c9" stroke-width="1.2"/>
<path d="M1420.0 470.0 C1423.3 473.3 1433.3 485.0 1440.0 490.0 C1446.7 495.0 1456.7 498.3 1460.0 500.0" fill="none" stroke="#c9c9c9" stroke-width="1.2"/>
<path d="M922.0 720.0 C928.3 718.3 945.3 713.3 960.0 710.0 C974.7 706.7 995.0 703.3 1010.0 700.0 C1025.0 696.7 1043.3 691.7 1050.0 690.0" fill="none" stroke="#c9c9c9" stroke-width="1.2"/>
<path d="M1180.0 600.0 C1185.0 601.7 1201.7 603.3 1210.0 610.0 C1218.3 616.7 1221.7 631.7 1230.0 640.0 C1238.3 648.3 1248.3 653.3 1260.0 660.0 C1271.7 666.7 1293.3 676.7 1300.0 680.0" fill="none" stroke="#c9c9c9" stroke-width="1.2"/>
<path d="M1110.0 650.0 C1115.0 651.7 1130.0 655.0 1140.0 660.0 C1150.0 665.0 1160.0 673.3 1170.0 680.0 C1180.0 686.7 1193.3 688.2 1200.0 700.0 C1206.7 711.8 1208.3 742.5 1210.0 751.0" fill="none" stroke="#c9c9c9" stroke-width="1.2"/>
<path d="M1300.0 700.0 C1303.3 703.3 1315.0 711.5 1320.0 720.0 C1325.0 728.5 1328.3 745.8 1330.0 751.0" fill="none" stroke="#c9c9c9" stroke-width="1.2"/>
<path d="M1440.0 700.0 C1441.7 703.3 1445.0 713.3 1450.0 720.0 C1455.0 726.7 1465.0 734.8 1470.0 740.0 C1475.0 745.2 1478.3 749.2 1480.0 751.0" fill="none" stroke="#c9c9c9" stroke-width="1.2"/>
<path d="M1001.0 487.0 C1004.8 495.2 1013.8 522.2 1024.0 536.0 C1034.2 549.8 1051.3 559.8 1062.0 570.0 C1072.7 580.2 1083.0 578.0 1088.0 597.0 C1093.0 616.0 1090.5 658.3 1092.0 684.0 C1093.5 709.7 1096.2 739.8 1097.0 751.0" fill="none" stroke="#c9c9c9" stroke-width="1.2"/>
<path d="M921.0 661.0 C933.7 652.8 961.0 627.2 997.0 612.0 C1033.0 596.8 1094.8 581.3 1137.0 570.0 C1179.2 558.7 1231.2 548.3 1250.0 544.0" fill="none" stroke="#c9c9c9" stroke-width="1.2"/>
<path d="M1092.0 650.0 C1111.0 643.7 1179.7 622.0 1206.0 612.0 C1232.3 602.0 1242.7 593.7 1250.0 590.0" fill="none" stroke="#c9c9c9" stroke-width="1.2"/>
<path d="M921.0 620.0 C927.3 622.5 947.5 630.7 959.0 635.0 C970.5 639.3 985.5 634.7 990.0 646.0 C994.5 657.3 986.7 693.5 986.0 703.0" fill="none" stroke="#c9c9c9" stroke-width="1.2"/>
<path d="M921.0 423.0 C926.2 428.7 943.2 443.8 952.0 457.0 C960.8 470.2 970.8 485.0 974.0 502.0 C977.2 519.0 970.3 540.0 971.0 559.0 C971.7 578.0 976.8 606.5 978.0 616.0" fill="none" stroke="#c9c9c9" stroke-width="1.2"/>
<path d="M1110.0 420.0 C1106.7 423.3 1096.7 431.7 1090.0 440.0 C1083.3 448.3 1076.7 463.3 1070.0 470.0 C1063.3 476.7 1053.3 478.3 1050.0 480.0" fill="none" stroke="#c9c9c9" stroke-width="1.2"/>
<path d="M1160.0 185.0 C1163.3 192.5 1173.3 215.8 1180.0 230.0 C1186.7 244.2 1191.7 258.3 1200.0 270.0 C1208.3 281.7 1225.0 295.0 1230.0 300.0" fill="none" stroke="#c9c9c9" stroke-width="1.2"/>
<path d="M922.0 470.0 C925.0 475.0 935.3 488.3 940.0 500.0 C944.7 511.7 948.3 533.3 950.0 540.0" fill="none" stroke="#c9c9c9" stroke-width="1.2"/>
<path d="M1500.0 185.0 C1498.3 192.5 1493.3 215.8 1490.0 230.0 C1486.7 244.2 1485.0 258.3 1480.0 270.0 C1475.0 281.7 1466.7 290.0 1460.0 300.0 C1453.3 310.0 1443.3 325.0 1440.0 330.0" fill="none" stroke="#c9c9c9" stroke-width="1.2"/>
<path d="M1380.0 185.0 C1383.3 192.5 1393.3 217.5 1400.0 230.0 C1406.7 242.5 1413.3 251.7 1420.0 260.0 C1426.7 268.3 1431.7 273.3 1440.0 280.0 C1448.3 286.7 1453.2 295.0 1470.0 300.0 C1486.8 305.0 1529.2 308.3 1541.0 310.0" fill="none" stroke="#c9c9c9" stroke-width="1.2"/>
<path d="M1230.0 330.0 C1235.0 335.0 1250.0 350.0 1260.0 360.0 C1270.0 370.0 1283.3 383.3 1290.0 390.0 C1296.7 396.7 1298.3 398.3 1300.0 400.0" fill="none" stroke="#c9c9c9" stroke-width="1.2"/>
<path d="M1160.0 620.0 C1163.3 626.7 1175.0 646.7 1180.0 660.0 C1185.0 673.3 1189.2 684.8 1190.0 700.0 C1190.8 715.2 1185.8 742.5 1185.0 751.0" fill="none" stroke="#c9c9c9" stroke-width="1.2"/>
<path d="M1260.0 640.0 C1266.7 643.3 1286.7 653.3 1300.0 660.0 C1313.3 666.7 1328.3 673.3 1340.0 680.0 C1351.7 686.7 1365.0 696.7 1370.0 700.0" fill="none" stroke="#c9c9c9" stroke-width="1.2"/>
<path d="M1480.0 620.0 C1483.3 625.0 1493.3 636.7 1500.0 650.0 C1506.7 663.3 1513.2 688.3 1520.0 700.0 C1526.8 711.7 1537.5 716.7 1541.0 720.0" fill="none" stroke="#c9c9c9" stroke-width="1.2"/>
<path d="M922.0 240.0 C926.7 241.7 940.3 248.7 950.0 250.0 C959.7 251.3 970.0 247.0 980.0 248.0 C990.0 249.0 1005.0 254.7 1010.0 256.0" fill="none" stroke="#c9c9c9" stroke-width="1.2"/>
<path d="M1110.0 185.0 C1111.7 190.8 1116.7 209.2 1120.0 220.0 C1123.3 230.8 1125.0 240.0 1130.0 250.0 C1135.0 260.0 1141.7 271.7 1150.0 280.0 C1158.3 288.3 1175.0 296.7 1180.0 300.0" fill="none" stroke="#c9c9c9" stroke-width="1.2"/>
<path d="M1320.0 270.0 C1325.0 273.3 1340.0 285.0 1350.0 290.0 C1360.0 295.0 1368.3 295.0 1380.0 300.0 C1391.7 305.0 1406.7 315.0 1420.0 320.0 C1433.3 325.0 1453.3 328.3 1460.0 330.0" fill="none" stroke="#c9c9c9" stroke-width="1.2"/>
<path d="M1360.0 185.0 C1358.3 190.8 1353.3 209.2 1350.0 220.0 C1346.7 230.8 1341.7 245.0 1340.0 250.0" fill="none" stroke="#c9c9c9" stroke-width="1.2"/>
<path d="M1060.0 420.0 C1063.3 425.0 1075.0 441.7 1080.0 450.0 C1085.0 458.3 1088.3 466.7 1090.0 470.0" fill="none" stroke="#c9c9c9" stroke-width="1.2"/>
<path d="M940.0 380.0 C945.0 383.3 960.0 395.0 970.0 400.0 C980.0 405.0 988.3 406.7 1000.0 410.0 C1011.7 413.3 1033.3 418.3 1040.0 420.0" fill="none" stroke="#c9c9c9" stroke-width="1.2"/>
<path d="M1420.0 420.0 C1423.3 425.0 1430.0 441.7 1440.0 450.0 C1450.0 458.3 1466.7 465.0 1480.0 470.0 C1493.3 475.0 1513.3 478.3 1520.0 480.0" fill="none" stroke="#c9c9c9" stroke-width="1.2"/>
<path d="M1380.0 700.0 C1386.7 701.7 1405.0 706.7 1420.0 710.0 C1435.0 713.3 1453.3 719.2 1470.0 720.0 C1486.7 720.8 1511.7 715.8 1520.0 715.0" fill="none" stroke="#c9c9c9" stroke-width="1.2"/>
<path d="M1200.0 751.0 C1205.0 745.8 1220.0 728.5 1230.0 720.0 C1240.0 711.5 1255.0 703.3 1260.0 700.0" fill="none" stroke="#c9c9c9" stroke-width="1.2"/>
<path d="M922.0 326.0 C924.5 321.2 932.0 315.3 937.0 312.0 C942.0 308.7 946.2 307.5 952.0 306.0 C957.8 304.5 966.5 304.0 972.0 303.0 C977.5 302.0 980.3 300.7 985.0 300.0 C989.7 299.3 994.5 298.5 1000.0 299.0 C1005.5 299.5 1015.3 301.2 1018.0 303.0 C1020.7 304.8 1019.7 308.2 1016.0 310.0 C1012.3 311.8 1001.7 312.7 996.0 314.0 C990.3 315.3 986.7 316.0 982.0 318.0 C977.3 320.0 973.0 323.3 968.0 326.0 C963.0 328.7 957.0 331.8 952.0 334.0 C947.0 336.2 943.0 337.8 938.0 339.0 C933.0 340.2 924.7 343.2 922.0 341.0 C919.3 338.8 919.5 330.8 922.0 326.0Z" fill="#cacaca"/>
<path d="M955.0 366.0 C957.2 364.3 963.8 363.0 965.0 365.0 C966.2 367.0 964.2 373.8 962.0 378.0 C959.8 382.2 954.7 388.7 952.0 390.0 C949.3 391.3 946.0 388.5 946.0 386.0 C946.0 383.5 950.5 378.3 952.0 375.0 C953.5 371.7 952.8 367.7 955.0 366.0Z" fill="#cacaca"/>
<path d="M960.0 222.0 C961.7 219.5 968.3 218.7 972.0 219.0 C975.7 219.3 980.2 221.8 982.0 224.0 C983.8 226.2 984.7 230.0 983.0 232.0 C981.3 234.0 975.5 235.7 972.0 236.0 C968.5 236.3 964.0 236.3 962.0 234.0 C960.0 231.7 958.3 224.5 960.0 222.0Z" fill="#cacaca"/>
<path d="M1123.0 318.0 C1126.3 317.5 1138.8 321.7 1145.0 324.0 C1151.2 326.3 1157.0 327.3 1160.0 332.0 C1163.0 336.7 1159.5 346.2 1163.0 352.0 C1166.5 357.8 1174.3 363.7 1181.0 367.0 C1187.7 370.3 1198.8 369.8 1203.0 372.0 C1207.2 374.2 1209.3 379.5 1206.0 380.0 C1202.7 380.5 1191.5 379.3 1183.0 375.0 C1174.5 370.7 1160.5 360.3 1155.0 354.0 C1149.5 347.7 1155.0 341.5 1150.0 337.0 C1145.0 332.5 1129.5 330.2 1125.0 327.0 C1120.5 323.8 1119.7 318.5 1123.0 318.0Z" fill="#cacaca"/>
<path d="M1163.0 554.0 C1166.2 552.8 1176.3 553.3 1181.0 555.0 C1185.7 556.7 1186.8 561.2 1191.0 564.0 C1195.2 566.8 1203.8 569.5 1206.0 572.0 C1208.2 574.5 1207.3 578.2 1204.0 579.0 C1200.7 579.8 1192.3 578.2 1186.0 577.0 C1179.7 575.8 1170.0 574.5 1166.0 572.0 C1162.0 569.5 1162.5 565.0 1162.0 562.0 C1161.5 559.0 1159.8 555.2 1163.0 554.0Z" fill="#cacaca"/>
<path d="M1018.0 626.0 C1019.3 623.8 1025.0 621.7 1028.0 622.0 C1031.0 622.3 1035.7 625.7 1036.0 628.0 C1036.3 630.3 1032.7 634.8 1030.0 636.0 C1027.3 637.2 1022.0 636.7 1020.0 635.0 C1018.0 633.3 1016.7 628.2 1018.0 626.0Z" fill="#cacaca"/>
<path d="M1500.0 318.0 C1502.0 317.0 1515.7 320.0 1520.0 322.0 C1524.3 324.0 1528.0 329.0 1526.0 330.0 C1524.0 331.0 1512.3 330.0 1508.0 328.0 C1503.7 326.0 1498.0 319.0 1500.0 318.0Z" fill="#cacaca"/>
<path d="M1400.0 710.0 C1402.5 708.0 1415.0 713.0 1420.0 718.0 C1425.0 723.0 1430.3 735.5 1430.0 740.0 C1429.7 744.5 1422.2 746.7 1418.0 745.0 C1413.8 743.3 1408.0 735.8 1405.0 730.0 C1402.0 724.2 1397.5 712.0 1400.0 710.0Z" fill="#cacaca"/>
<path d="M1445.0 690.0 C1447.0 689.2 1453.8 696.3 1455.0 700.0 C1456.2 703.7 1454.0 711.2 1452.0 712.0 C1450.0 712.8 1444.2 708.7 1443.0 705.0 C1441.8 701.3 1443.0 690.8 1445.0 690.0Z" fill="#cacaca"/>
<path d="M1460.0 505.0 C1461.7 503.7 1478.3 507.8 1480.0 510.0 C1481.7 512.2 1473.3 518.8 1470.0 518.0 C1466.7 517.2 1458.3 506.3 1460.0 505.0Z" fill="#cacaca"/>
<path d="M1012.0 377.0 C1013.3 375.3 1021.3 374.2 1024.0 375.0 C1026.7 375.8 1029.3 380.3 1028.0 382.0 C1026.7 383.7 1018.7 385.8 1016.0 385.0 C1013.3 384.2 1010.7 378.7 1012.0 377.0Z" fill="#cacaca"/>
<path d="M1098.0 407.0 C1099.3 405.3 1107.3 403.2 1110.0 404.0 C1112.7 404.8 1115.3 410.3 1114.0 412.0 C1112.7 413.7 1104.7 414.8 1102.0 414.0 C1099.3 413.2 1096.7 408.7 1098.0 407.0Z" fill="#cacaca"/>
<path d="M1248.0 407.0 C1249.7 405.2 1259.0 403.0 1262.0 404.0 C1265.0 405.0 1267.7 411.2 1266.0 413.0 C1264.3 414.8 1255.0 416.0 1252.0 415.0 C1249.0 414.0 1246.3 408.8 1248.0 407.0Z" fill="#cacaca"/>
<path d="M1448.0 347.0 C1449.7 345.3 1459.0 343.2 1462.0 344.0 C1465.0 344.8 1467.7 350.3 1466.0 352.0 C1464.3 353.7 1455.0 354.8 1452.0 354.0 C1449.0 353.2 1446.3 348.7 1448.0 347.0Z" fill="#cacaca"/>
<path d="M1398.0 298.0 C1399.7 296.3 1409.0 294.2 1412.0 295.0 C1415.0 295.8 1417.7 301.3 1416.0 303.0 C1414.3 304.7 1405.0 305.8 1402.0 305.0 C1399.0 304.2 1396.3 299.7 1398.0 298.0Z" fill="#cacaca"/>
<path d="M1378.0 382.0 C1379.7 380.3 1389.0 379.0 1392.0 380.0 C1395.0 381.0 1397.7 386.3 1396.0 388.0 C1394.3 389.7 1385.0 391.0 1382.0 390.0 C1379.0 389.0 1376.3 383.7 1378.0 382.0Z" fill="#cacaca"/>
<path d="M1215.0 190.0 C1217.0 188.5 1227.2 185.5 1230.0 186.0 C1232.8 186.5 1234.0 191.5 1232.0 193.0 C1230.0 194.5 1220.8 195.5 1218.0 195.0 C1215.2 194.5 1213.0 191.5 1215.0 190.0Z" fill="#cacaca"/>
<path d="M938.0 465.0 C939.0 462.3 945.7 459.2 948.0 460.0 C950.3 460.8 953.0 467.3 952.0 470.0 C951.0 472.7 944.3 476.8 942.0 476.0 C939.7 475.2 937.0 467.7 938.0 465.0Z" fill="#cacaca"/>
<path d="M955.0 420.0 C956.2 418.0 962.8 415.3 965.0 416.0 C967.2 416.7 969.2 422.0 968.0 424.0 C966.8 426.0 960.2 428.7 958.0 428.0 C955.8 427.3 953.8 422.0 955.0 420.0Z" fill="#cacaca"/>
<path d="M1100.0 345.0 C1101.3 343.3 1109.3 341.2 1112.0 342.0 C1114.7 342.8 1117.3 348.3 1116.0 350.0 C1114.7 351.7 1106.7 352.8 1104.0 352.0 C1101.3 351.2 1098.7 346.7 1100.0 345.0Z" fill="#cacaca"/>
<path d="M1150.0 190.0 C1152.2 188.3 1162.0 187.0 1165.0 188.0 C1168.0 189.0 1170.2 194.3 1168.0 196.0 C1165.8 197.7 1155.0 199.0 1152.0 198.0 C1149.0 197.0 1147.8 191.7 1150.0 190.0Z" fill="#cacaca"/>
<path d="M1058.0 240.0 C1059.7 238.3 1067.7 237.0 1070.0 238.0 C1072.3 239.0 1073.7 244.3 1072.0 246.0 C1070.3 247.7 1062.3 249.0 1060.0 248.0 C1057.7 247.0 1056.3 241.7 1058.0 240.0Z" fill="#cacaca"/>
<path d="M1480.0 560.0 C1481.7 557.7 1491.0 555.0 1494.0 556.0 C1497.0 557.0 1499.7 563.7 1498.0 566.0 C1496.3 568.3 1487.0 571.0 1484.0 570.0 C1481.0 569.0 1478.3 562.3 1480.0 560.0Z" fill="#cacaca"/>
<path d="M1500.0 650.0 C1501.0 646.8 1507.7 643.3 1510.0 645.0 C1512.3 646.7 1515.0 656.8 1514.0 660.0 C1513.0 663.2 1506.3 665.7 1504.0 664.0 C1501.7 662.3 1499.0 653.2 1500.0 650.0Z" fill="#cacaca"/>
<path d="M1250.0 700.0 C1251.3 697.3 1259.3 694.7 1262.0 696.0 C1264.7 697.3 1267.3 705.3 1266.0 708.0 C1264.7 710.7 1256.7 713.3 1254.0 712.0 C1251.3 710.7 1248.7 702.7 1250.0 700.0Z" fill="#cacaca"/>
<path d="M1040.0 680.0 C1041.0 677.7 1047.7 675.0 1050.0 676.0 C1052.3 677.0 1055.0 683.7 1054.0 686.0 C1053.0 688.3 1046.3 691.0 1044.0 690.0 C1041.7 689.0 1039.0 682.3 1040.0 680.0Z" fill="#cacaca"/>
<path d="M1076.0 276.0 C1074.3 279.3 1068.3 291.5 1066.0 296.0 C1063.7 300.5 1062.3 301.2 1062.0 303.0 C1061.7 304.8 1064.5 304.5 1064.0 307.0 C1063.5 309.5 1060.0 314.2 1059.0 318.0 C1058.0 321.8 1057.2 324.7 1058.0 330.0 C1058.8 335.3 1059.0 343.3 1064.0 350.0 C1069.0 356.7 1079.0 362.5 1088.0 370.0 C1097.0 377.5 1107.7 385.3 1118.0 395.0 C1128.3 404.7 1142.2 420.5 1150.0 428.0 C1157.8 435.5 1159.7 436.0 1165.0 440.0 C1170.3 444.0 1176.3 446.8 1182.0 452.0 C1187.7 457.2 1192.8 464.8 1199.0 471.0 C1205.2 477.2 1208.8 479.2 1219.0 489.0 C1229.2 498.8 1247.7 518.2 1260.0 530.0 C1272.3 541.8 1283.0 548.3 1293.0 560.0 C1303.0 571.7 1312.8 587.2 1320.0 600.0 C1327.2 612.8 1329.7 625.8 1336.0 637.0 C1342.3 648.2 1350.3 656.7 1358.0 667.0 C1365.7 677.3 1374.8 687.5 1382.0 699.0 C1389.2 710.5 1397.0 727.3 1401.0 736.0 C1405.0 744.7 1405.2 748.5 1406.0 751.0" fill="none" stroke="#17c964" stroke-width="4.2" stroke-linejoin="round"/><path d="M1076.0 276.0 C1074.3 279.3 1068.3 291.5 1066.0 296.0 C1063.7 300.5 1062.3 301.2 1062.0 303.0 C1061.7 304.8 1064.5 304.5 1064.0 307.0 C1063.5 309.5 1060.0 314.2 1059.0 318.0 C1058.0 321.8 1057.2 324.7 1058.0 330.0 C1058.8 335.3 1059.0 343.3 1064.0 350.0 C1069.0 356.7 1079.0 362.5 1088.0 370.0 C1097.0 377.5 1107.7 385.3 1118.0 395.0 C1128.3 404.7 1142.2 420.5 1150.0 428.0 C1157.8 435.5 1159.7 436.0 1165.0 440.0 C1170.3 444.0 1176.3 446.8 1182.0 452.0 C1187.7 457.2 1192.8 464.8 1199.0 471.0 C1205.2 477.2 1208.8 479.2 1219.0 489.0 C1229.2 498.8 1247.7 518.2 1260.0 530.0 C1272.3 541.8 1283.0 548.3 1293.0 560.0 C1303.0 571.7 1312.8 587.2 1320.0 600.0 C1327.2 612.8 1329.7 625.8 1336.0 637.0 C1342.3 648.2 1350.3 656.7 1358.0 667.0 C1365.7 677.3 1374.8 687.5 1382.0 699.0 C1389.2 710.5 1397.0 727.3 1401.0 736.0 C1405.0 744.7 1405.2 748.5 1406.0 751.0" fill="none" stroke="#ffffff" stroke-width="1.39" stroke-linejoin="round"/>
<path d="M922.0 608.0 C929.0 606.0 954.5 601.7 964.0 596.0 C973.5 590.3 971.2 584.2 979.0 574.0 C986.8 563.8 1004.7 542.2 1011.0 535.0 C1017.3 527.8 1007.7 534.3 1017.0 531.0 C1026.3 527.7 1056.7 517.7 1067.0 515.0 C1077.3 512.3 1074.5 514.0 1079.0 515.0 C1083.5 516.0 1089.0 520.0 1094.0 521.0 C1099.0 522.0 1103.3 522.0 1109.0 521.0 C1114.7 520.0 1124.8 516.0 1128.0 515.0" fill="none" stroke="#17c964" stroke-width="4.2" stroke-linejoin="round"/><path d="M922.0 608.0 C929.0 606.0 954.5 601.7 964.0 596.0 C973.5 590.3 971.2 584.2 979.0 574.0 C986.8 563.8 1004.7 542.2 1011.0 535.0 C1017.3 527.8 1007.7 534.3 1017.0 531.0 C1026.3 527.7 1056.7 517.7 1067.0 515.0 C1077.3 512.3 1074.5 514.0 1079.0 515.0 C1083.5 516.0 1089.0 520.0 1094.0 521.0 C1099.0 522.0 1103.3 522.0 1109.0 521.0 C1114.7 520.0 1124.8 516.0 1128.0 515.0" fill="none" stroke="#ffffff" stroke-width="1.39" stroke-linejoin="round"/>
<path d="M1291.0 432.0 C1294.5 430.8 1307.5 426.7 1312.0 425.0 C1316.5 423.3 1317.0 424.5 1318.0 422.0 C1319.0 419.5 1320.0 414.3 1318.0 410.0 C1316.0 405.7 1307.7 399.0 1306.0 396.0 C1304.3 393.0 1304.3 394.0 1308.0 392.0 C1311.7 390.0 1320.7 385.8 1328.0 384.0 C1335.3 382.2 1348.0 381.5 1352.0 381.0" fill="none" stroke="#17c964" stroke-width="4.2" stroke-linejoin="round"/><path d="M1291.0 432.0 C1294.5 430.8 1307.5 426.7 1312.0 425.0 C1316.5 423.3 1317.0 424.5 1318.0 422.0 C1319.0 419.5 1320.0 414.3 1318.0 410.0 C1316.0 405.7 1307.7 399.0 1306.0 396.0 C1304.3 393.0 1304.3 394.0 1308.0 392.0 C1311.7 390.0 1320.7 385.8 1328.0 384.0 C1335.3 382.2 1348.0 381.5 1352.0 381.0" fill="none" stroke="#ffffff" stroke-width="1.39" stroke-linejoin="round"/>
<path d="M1388.0 347.0 C1388.7 347.8 1395.3 348.2 1392.0 352.0 C1388.7 355.8 1374.0 364.8 1368.0 370.0 C1362.0 375.2 1357.5 379.3 1356.0 383.0 C1354.5 386.7 1359.3 389.2 1359.0 392.0 C1358.7 394.8 1354.5 396.2 1354.0 400.0 C1353.5 403.8 1353.0 410.0 1356.0 415.0 C1359.0 420.0 1368.0 425.8 1372.0 430.0 C1376.0 434.2 1375.3 437.3 1380.0 440.0 C1384.7 442.7 1392.0 443.5 1400.0 446.0 C1408.0 448.5 1419.7 451.5 1428.0 455.0 C1436.3 458.5 1445.3 462.5 1450.0 467.0 C1454.7 471.5 1454.7 474.8 1456.0 482.0 C1457.3 489.2 1457.8 503.0 1458.0 510.0 C1458.2 517.0 1452.7 519.0 1457.0 524.0 C1461.3 529.0 1470.0 531.0 1484.0 540.0 C1498.0 549.0 1531.5 571.7 1541.0 578.0" fill="none" stroke="#17c964" stroke-width="4.2" stroke-linejoin="round"/><path d="M1388.0 347.0 C1388.7 347.8 1395.3 348.2 1392.0 352.0 C1388.7 355.8 1374.0 364.8 1368.0 370.0 C1362.0 375.2 1357.5 379.3 1356.0 383.0 C1354.5 386.7 1359.3 389.2 1359.0 392.0 C1358.7 394.8 1354.5 396.2 1354.0 400.0 C1353.5 403.8 1353.0 410.0 1356.0 415.0 C1359.0 420.0 1368.0 425.8 1372.0 430.0 C1376.0 434.2 1375.3 437.3 1380.0 440.0 C1384.7 442.7 1392.0 443.5 1400.0 446.0 C1408.0 448.5 1419.7 451.5 1428.0 455.0 C1436.3 458.5 1445.3 462.5 1450.0 467.0 C1454.7 471.5 1454.7 474.8 1456.0 482.0 C1457.3 489.2 1457.8 503.0 1458.0 510.0 C1458.2 517.0 1452.7 519.0 1457.0 524.0 C1461.3 529.0 1470.0 531.0 1484.0 540.0 C1498.0 549.0 1531.5 571.7 1541.0 578.0" fill="none" stroke="#ffffff" stroke-width="1.39" stroke-linejoin="round"/>
<path d="M1412.0 563.0 C1416.8 564.5 1432.5 567.3 1441.0 572.0 C1449.5 576.7 1455.8 585.2 1463.0 591.0 C1470.2 596.8 1476.0 602.8 1484.0 607.0 C1492.0 611.2 1502.8 612.8 1511.0 616.0 C1519.2 619.2 1528.0 622.0 1533.0 626.0 C1538.0 630.0 1539.7 637.7 1541.0 640.0" fill="none" stroke="#17c964" stroke-width="4.2" stroke-linejoin="round"/><path d="M1412.0 563.0 C1416.8 564.5 1432.5 567.3 1441.0 572.0 C1449.5 576.7 1455.8 585.2 1463.0 591.0 C1470.2 596.8 1476.0 602.8 1484.0 607.0 C1492.0 611.2 1502.8 612.8 1511.0 616.0 C1519.2 619.2 1528.0 622.0 1533.0 626.0 C1538.0 630.0 1539.7 637.7 1541.0 640.0" fill="none" stroke="#ffffff" stroke-width="1.39" stroke-linejoin="round"/>
<path d="M1520.0 751.0 C1521.7 749.8 1526.5 745.8 1530.0 744.0 C1533.5 742.2 1539.2 740.7 1541.0 740.0" fill="none" stroke="#17c964" stroke-width="4.2" stroke-linejoin="round"/><path d="M1520.0 751.0 C1521.7 749.8 1526.5 745.8 1530.0 744.0 C1533.5 742.2 1539.2 740.7 1541.0 740.0" fill="none" stroke="#ffffff" stroke-width="1.39" stroke-linejoin="round"/>
<path d="M922.0 294.0 C926.7 293.7 940.3 292.7 950.0 292.0 C959.7 291.3 971.0 292.2 980.0 290.0 C989.0 287.8 994.0 282.0 1004.0 279.0 C1014.0 276.0 1032.3 273.5 1040.0 272.0 C1047.7 270.5 1048.3 270.3 1050.0 270.0" fill="none" stroke="#3fdc84" stroke-width="1.6" stroke-dasharray="2 1.6" opacity="0.8"/>
<path d="M1090.0 262.0 C1096.7 259.5 1120.3 250.7 1130.0 247.0 C1139.7 243.3 1138.0 241.8 1148.0 240.0 C1158.0 238.2 1178.2 237.0 1190.0 236.0 C1201.8 235.0 1210.8 235.3 1219.0 234.0 C1227.2 232.7 1235.7 229.0 1239.0 228.0" fill="none" stroke="#3fdc84" stroke-width="1.6" stroke-dasharray="2 1.6" opacity="0.8"/>
<path d="M1282.0 228.0 C1286.7 229.3 1301.7 233.3 1310.0 236.0 C1318.3 238.7 1328.3 242.7 1332.0 244.0" fill="none" stroke="#3fdc84" stroke-width="1.6" stroke-dasharray="2 1.6" opacity="0.8"/>
<path d="M1294.0 217.0 C1299.7 216.8 1319.3 216.2 1328.0 216.0 C1336.7 215.8 1339.3 217.0 1346.0 216.0 C1352.7 215.0 1364.3 211.0 1368.0 210.0" fill="none" stroke="#3fdc84" stroke-width="1.6" stroke-dasharray="2 1.6" opacity="0.8"/>
<path d="M1256.0 256.0 C1261.7 255.7 1279.3 254.5 1290.0 254.0 C1300.7 253.5 1315.0 253.2 1320.0 253.0" fill="none" stroke="#3fdc84" stroke-width="1.6" stroke-dasharray="2 1.6" opacity="0.8"/>
<path d="M1261.0 210.0 C1264.2 208.3 1274.5 203.3 1280.0 200.0 C1285.5 196.7 1291.7 191.7 1294.0 190.0" fill="none" stroke="#3fdc84" stroke-width="1.6" stroke-dasharray="2 1.6" opacity="0.8"/>
<path d="M1408.0 360.0 C1415.0 359.3 1435.7 357.5 1450.0 356.0 C1464.3 354.5 1486.7 351.8 1494.0 351.0" fill="none" stroke="#3fdc84" stroke-width="1.6" stroke-dasharray="2 1.6" opacity="0.8"/>
<path d="M1241.0 228.0 C1243.5 229.7 1256.0 233.3 1256.0 238.0 C1256.0 242.7 1242.7 250.0 1241.0 256.0 C1239.3 262.0 1242.7 269.0 1246.0 274.0 C1249.3 279.0 1252.5 281.8 1261.0 286.0 C1269.5 290.2 1280.5 293.5 1297.0 299.0 C1313.5 304.5 1347.8 313.5 1360.0 319.0 C1372.2 324.5 1365.3 327.3 1370.0 332.0 C1374.7 336.7 1385.0 344.5 1388.0 347.0" fill="none" stroke="#2fd475" stroke-width="3.6" stroke-dasharray="5 1.5"/>
<path d="M1241.0 228.0 C1243.5 229.7 1256.0 233.3 1256.0 238.0 C1256.0 242.7 1242.7 250.0 1241.0 256.0 C1239.3 262.0 1242.7 269.0 1246.0 274.0 C1249.3 279.0 1252.5 281.8 1261.0 286.0 C1269.5 290.2 1280.5 293.5 1297.0 299.0 C1313.5 304.5 1347.8 313.5 1360.0 319.0 C1372.2 324.5 1365.3 327.3 1370.0 332.0 C1374.7 336.7 1385.0 344.5 1388.0 347.0" fill="none" stroke="#eaeaea" stroke-width="1.2"/>
<path d="M1094.0 480.0 L1110.0 471.0 L1117.0 466.0 L1132.0 455.0 L1145.0 452.0 L1156.0 455.0 L1172.0 456.0 L1186.0 456.0 L1206.0 458.0 L1224.0 456.0 L1227.0 437.0 L1230.0 421.0 L1238.0 419.0 L1247.0 422.0 L1261.0 425.0 L1273.0 428.0 L1288.0 434.0 L1290.0 440.0 L1284.0 452.0 L1302.0 456.0 L1318.0 459.0 L1329.0 456.0 L1335.0 448.0 L1336.0 441.0 L1353.0 443.0 L1362.0 461.0 L1373.0 470.0 L1393.0 474.0 L1397.0 486.0 L1421.0 483.0 L1439.0 494.0 L1459.0 501.0 L1460.0 521.0 L1470.0 534.0 L1471.0 535.0 L1471.0 535.0 L1459.0 548.0 L1435.0 548.0 L1413.0 553.0 L1404.0 557.0 L1403.0 573.0 L1397.0 586.0 L1388.0 597.0 L1360.0 599.0 L1351.0 617.0 L1335.0 625.0 L1315.0 624.0 L1298.0 613.0 L1298.0 597.0 L1272.0 595.0 L1269.0 578.0 L1247.0 572.0 L1229.0 570.0 L1228.0 555.0 L1257.0 550.0 L1272.0 535.0 L1242.0 532.0 L1220.0 524.0 L1199.0 518.0 L1186.0 512.0 L1178.0 505.0 L1172.0 512.0 L1146.0 513.0 L1145.0 502.0 L1135.0 492.0 L1094.0 491.0Z" fill="#3ac46e"/>
<path d="M1094.0 483.0 L1110.0 474.0 L1117.0 469.0 L1132.0 458.0 L1145.0 455.0 L1156.0 458.0 L1172.0 459.0 L1186.0 459.0 L1206.0 461.0 L1224.0 459.0 L1227.0 440.0 L1230.0 424.0 L1238.0 422.0 L1247.0 425.0 L1261.0 428.0 L1273.0 431.0 L1288.0 437.0 L1290.0 443.0 L1284.0 455.0 L1302.0 459.0 L1318.0 462.0 L1329.0 459.0 L1335.0 451.0 L1336.0 444.0 L1353.0 446.0 L1362.0 464.0 L1373.0 473.0 L1393.0 477.0 L1397.0 489.0 L1421.0 486.0 L1439.0 497.0 L1459.0 504.0 L1460.0 524.0 L1470.0 537.0 L1471.0 538.0 L1471.0 538.0 L1459.0 551.0 L1435.0 551.0 L1413.0 556.0 L1404.0 560.0 L1403.0 576.0 L1397.0 589.0 L1388.0 600.0 L1360.0 602.0 L1351.0 620.0 L1335.0 628.0 L1315.0 627.0 L1298.0 616.0 L1298.0 600.0 L1272.0 598.0 L1269.0 581.0 L1247.0 575.0 L1229.0 573.0 L1228.0 558.0 L1257.0 553.0 L1272.0 538.0 L1242.0 535.0 L1220.0 527.0 L1199.0 521.0 L1186.0 515.0 L1178.0 508.0 L1172.0 515.0 L1146.0 516.0 L1145.0 505.0 L1135.0 495.0 L1094.0 494.0Z" fill="#3ac46e"/>
<path d="M1094.0 486.0 L1110.0 477.0 L1117.0 472.0 L1132.0 461.0 L1145.0 458.0 L1156.0 461.0 L1172.0 462.0 L1186.0 462.0 L1206.0 464.0 L1224.0 462.0 L1227.0 443.0 L1230.0 427.0 L1238.0 425.0 L1247.0 428.0 L1261.0 431.0 L1273.0 434.0 L1288.0 440.0 L1290.0 446.0 L1284.0 458.0 L1302.0 462.0 L1318.0 465.0 L1329.0 462.0 L1335.0 454.0 L1336.0 447.0 L1353.0 449.0 L1362.0 467.0 L1373.0 476.0 L1393.0 480.0 L1397.0 492.0 L1421.0 489.0 L1439.0 500.0 L1459.0 507.0 L1460.0 527.0 L1470.0 540.0 L1471.0 541.0 L1471.0 541.0 L1459.0 554.0 L1435.0 554.0 L1413.0 559.0 L1404.0 563.0 L1403.0 579.0 L1397.0 592.0 L1388.0 603.0 L1360.0 605.0 L1351.0 623.0 L1335.0 631.0 L1315.0 630.0 L1298.0 619.0 L1298.0 603.0 L1272.0 601.0 L1269.0 584.0 L1247.0 578.0 L1229.0 576.0 L1228.0 561.0 L1257.0 556.0 L1272.0 541.0 L1242.0 538.0 L1220.0 530.0 L1199.0 524.0 L1186.0 518.0 L1178.0 511.0 L1172.0 518.0 L1146.0 519.0 L1145.0 508.0 L1135.0 498.0 L1094.0 497.0Z" fill="#3ac46e"/>
<path d="M1094.0 489.0 L1110.0 480.0 L1117.0 475.0 L1132.0 464.0 L1145.0 461.0 L1156.0 464.0 L1172.0 465.0 L1186.0 465.0 L1206.0 467.0 L1224.0 465.0 L1227.0 446.0 L1230.0 430.0 L1238.0 428.0 L1247.0 431.0 L1261.0 434.0 L1273.0 437.0 L1288.0 443.0 L1290.0 449.0 L1284.0 461.0 L1302.0 465.0 L1318.0 468.0 L1329.0 465.0 L1335.0 457.0 L1336.0 450.0 L1353.0 452.0 L1362.0 470.0 L1373.0 479.0 L1393.0 483.0 L1397.0 495.0 L1421.0 492.0 L1439.0 503.0 L1459.0 510.0 L1460.0 530.0 L1470.0 543.0 L1471.0 544.0 L1471.0 544.0 L1459.0 557.0 L1435.0 557.0 L1413.0 562.0 L1404.0 566.0 L1403.0 582.0 L1397.0 595.0 L1388.0 606.0 L1360.0 608.0 L1351.0 626.0 L1335.0 634.0 L1315.0 633.0 L1298.0 622.0 L1298.0 606.0 L1272.0 604.0 L1269.0 587.0 L1247.0 581.0 L1229.0 579.0 L1228.0 564.0 L1257.0 559.0 L1272.0 544.0 L1242.0 541.0 L1220.0 533.0 L1199.0 527.0 L1186.0 521.0 L1178.0 514.0 L1172.0 521.0 L1146.0 522.0 L1145.0 511.0 L1135.0 501.0 L1094.0 500.0Z" fill="#3ac46e"/>
<path d="M1094.0 492.0 L1110.0 483.0 L1117.0 478.0 L1132.0 467.0 L1145.0 464.0 L1156.0 467.0 L1172.0 468.0 L1186.0 468.0 L1206.0 470.0 L1224.0 468.0 L1227.0 449.0 L1230.0 433.0 L1238.0 431.0 L1247.0 434.0 L1261.0 437.0 L1273.0 440.0 L1288.0 446.0 L1290.0 452.0 L1284.0 464.0 L1302.0 468.0 L1318.0 471.0 L1329.0 468.0 L1335.0 460.0 L1336.0 453.0 L1353.0 455.0 L1362.0 473.0 L1373.0 482.0 L1393.0 486.0 L1397.0 498.0 L1421.0 495.0 L1439.0 506.0 L1459.0 513.0 L1460.0 533.0 L1470.0 546.0 L1471.0 547.0 L1471.0 547.0 L1459.0 560.0 L1435.0 560.0 L1413.0 565.0 L1404.0 569.0 L1403.0 585.0 L1397.0 598.0 L1388.0 609.0 L1360.0 611.0 L1351.0 629.0 L1335.0 637.0 L1315.0 636.0 L1298.0 625.0 L1298.0 609.0 L1272.0 607.0 L1269.0 590.0 L1247.0 584.0 L1229.0 582.0 L1228.0 567.0 L1257.0 562.0 L1272.0 547.0 L1242.0 544.0 L1220.0 536.0 L1199.0 530.0 L1186.0 524.0 L1178.0 517.0 L1172.0 524.0 L1146.0 525.0 L1145.0 514.0 L1135.0 504.0 L1094.0 503.0Z" fill="#3ac46e"/>
<path d="M1085.7 480.0 V492.0 A8.3 4.6 0 0 0 1102.3 492.0 V480.0Z" fill="#3ac46e"/>
<path d="M1102.4 471.0 V483.0 A7.6 4.2 0 0 0 1117.6 483.0 V471.0Z" fill="#3ac46e"/>
<path d="M1107.4 466.0 V478.0 A9.6 5.3 0 0 0 1126.6 478.0 V466.0Z" fill="#3ac46e"/>
<path d="M1124.7 455.0 V467.0 A7.3 4.0 0 0 0 1139.3 467.0 V455.0Z" fill="#3ac46e"/>
<path d="M1135.9 452.0 V464.0 A9.1 5.0 0 0 0 1154.1 464.0 V452.0Z" fill="#3ac46e"/>
<path d="M1147.5 455.0 V467.0 A8.5 4.7 0 0 0 1164.5 467.0 V455.0Z" fill="#3ac46e"/>
<path d="M1164.8 456.0 V468.0 A7.2 4.0 0 0 0 1179.2 468.0 V456.0Z" fill="#3ac46e"/>
<path d="M1177.0 456.0 V468.0 A9.0 5.0 0 0 0 1195.0 468.0 V456.0Z" fill="#3ac46e"/>
<path d="M1198.9 458.0 V470.0 A7.1 3.9 0 0 0 1213.1 470.0 V458.0Z" fill="#3ac46e"/>
<path d="M1215.3 456.0 V468.0 A8.7 4.8 0 0 0 1232.7 468.0 V456.0Z" fill="#3ac46e"/>
<path d="M1219.7 437.0 V449.0 A7.3 4.0 0 0 0 1234.3 449.0 V437.0Z" fill="#3ac46e"/>
<path d="M1222.6 421.0 V433.0 A7.4 4.0 0 0 0 1237.4 433.0 V421.0Z" fill="#3ac46e"/>
<path d="M1229.3 419.0 V431.0 A8.7 4.8 0 0 0 1246.7 431.0 V419.0Z" fill="#3ac46e"/>
<path d="M1236.7 422.0 V434.0 A10.3 5.7 0 0 0 1257.3 434.0 V422.0Z" fill="#3ac46e"/>
<path d="M1253.5 425.0 V437.0 A7.5 4.1 0 0 0 1268.5 437.0 V425.0Z" fill="#3ac46e"/>
<path d="M1265.1 428.0 V440.0 A7.9 4.3 0 0 0 1280.9 440.0 V428.0Z" fill="#3ac46e"/>
<path d="M1278.5 434.0 V446.0 A9.5 5.2 0 0 0 1297.5 446.0 V434.0Z" fill="#3ac46e"/>
<path d="M1279.2 440.0 V452.0 A10.8 5.9 0 0 0 1300.8 452.0 V440.0Z" fill="#3ac46e"/>
<path d="M1274.7 452.0 V464.0 A9.3 5.1 0 0 0 1293.3 464.0 V452.0Z" fill="#3ac46e"/>
<path d="M1293.4 456.0 V468.0 A8.6 4.7 0 0 0 1310.6 468.0 V456.0Z" fill="#3ac46e"/>
<path d="M1307.1 459.0 V471.0 A10.9 6.0 0 0 0 1328.9 471.0 V459.0Z" fill="#3ac46e"/>
<path d="M1321.8 456.0 V468.0 A7.2 4.0 0 0 0 1336.2 468.0 V456.0Z" fill="#3ac46e"/>
<path d="M1324.6 448.0 V460.0 A10.4 5.7 0 0 0 1345.4 460.0 V448.0Z" fill="#3ac46e"/>
<path d="M1327.8 441.0 V453.0 A8.2 4.5 0 0 0 1344.2 453.0 V441.0Z" fill="#3ac46e"/>
<path d="M1345.4 443.0 V455.0 A7.6 4.2 0 0 0 1360.6 455.0 V443.0Z" fill="#3ac46e"/>
<path d="M1354.5 461.0 V473.0 A7.5 4.1 0 0 0 1369.5 473.0 V461.0Z" fill="#3ac46e"/>
<path d="M1364.8 470.0 V482.0 A8.2 4.5 0 0 0 1381.2 482.0 V470.0Z" fill="#3ac46e"/>
<path d="M1382.7 474.0 V486.0 A10.3 5.6 0 0 0 1403.3 486.0 V474.0Z" fill="#3ac46e"/>
<path d="M1389.3 486.0 V498.0 A7.7 4.2 0 0 0 1404.7 498.0 V486.0Z" fill="#3ac46e"/>
<path d="M1411.7 483.0 V495.0 A9.3 5.1 0 0 0 1430.3 495.0 V483.0Z" fill="#3ac46e"/>
<path d="M1429.4 494.0 V506.0 A9.6 5.3 0 0 0 1448.6 506.0 V494.0Z" fill="#3ac46e"/>
<path d="M1450.5 501.0 V513.0 A8.5 4.7 0 0 0 1467.5 513.0 V501.0Z" fill="#3ac46e"/>
<path d="M1450.8 521.0 V533.0 A9.2 5.1 0 0 0 1469.2 533.0 V521.0Z" fill="#3ac46e"/>
<path d="M1462.7 534.0 V546.0 A7.3 4.0 0 0 0 1477.3 546.0 V534.0Z" fill="#3ac46e"/>
<path d="M1463.8 535.0 V547.0 A7.2 4.0 0 0 0 1478.2 547.0 V535.0Z" fill="#3ac46e"/>
<path d="M1463.2 535.0 V547.0 A7.8 4.3 0 0 0 1478.8 547.0 V535.0Z" fill="#3ac46e"/>
<path d="M1449.3 548.0 V560.0 A9.7 5.3 0 0 0 1468.7 560.0 V548.0Z" fill="#3ac46e"/>
<path d="M1426.3 548.0 V560.0 A8.7 4.8 0 0 0 1443.7 560.0 V548.0Z" fill="#3ac46e"/>
<path d="M1404.7 553.0 V565.0 A8.3 4.5 0 0 0 1421.3 565.0 V553.0Z" fill="#3ac46e"/>
<path d="M1394.7 557.0 V569.0 A9.3 5.1 0 0 0 1413.3 569.0 V557.0Z" fill="#3ac46e"/>
<path d="M1394.2 573.0 V585.0 A8.8 4.8 0 0 0 1411.8 585.0 V573.0Z" fill="#3ac46e"/>
<path d="M1388.8 586.0 V598.0 A8.2 4.5 0 0 0 1405.2 598.0 V586.0Z" fill="#3ac46e"/>
<path d="M1377.8 597.0 V609.0 A10.2 5.6 0 0 0 1398.2 609.0 V597.0Z" fill="#3ac46e"/>
<path d="M1364.2 598.0 V610.0 A9.8 5.4 0 0 0 1383.8 610.0 V598.0Z" fill="#3ac46e"/>
<path d="M1352.0 599.0 V611.0 A8.0 4.4 0 0 0 1368.0 611.0 V599.0Z" fill="#3ac46e"/>
<path d="M1341.7 617.0 V629.0 A9.3 5.1 0 0 0 1360.3 629.0 V617.0Z" fill="#3ac46e"/>
<path d="M1325.9 625.0 V637.0 A9.1 5.0 0 0 0 1344.1 637.0 V625.0Z" fill="#3ac46e"/>
<path d="M1304.5 624.0 V636.0 A10.5 5.8 0 0 0 1325.5 636.0 V624.0Z" fill="#3ac46e"/>
<path d="M1288.1 613.0 V625.0 A9.9 5.5 0 0 0 1307.9 625.0 V613.0Z" fill="#3ac46e"/>
<path d="M1289.8 597.0 V609.0 A8.2 4.5 0 0 0 1306.2 609.0 V597.0Z" fill="#3ac46e"/>
<path d="M1274.1 596.0 V608.0 A10.9 6.0 0 0 0 1295.9 608.0 V596.0Z" fill="#3ac46e"/>
<path d="M1264.5 595.0 V607.0 A7.5 4.1 0 0 0 1279.5 607.0 V595.0Z" fill="#3ac46e"/>
<path d="M1260.3 578.0 V590.0 A8.7 4.8 0 0 0 1277.7 590.0 V578.0Z" fill="#3ac46e"/>
<path d="M1237.0 572.0 V584.0 A10.0 5.5 0 0 0 1257.0 584.0 V572.0Z" fill="#3ac46e"/>
<path d="M1221.4 570.0 V582.0 A7.6 4.2 0 0 0 1236.6 582.0 V570.0Z" fill="#3ac46e"/>
<path d="M1219.0 555.0 V567.0 A9.0 4.9 0 0 0 1237.0 567.0 V555.0Z" fill="#3ac46e"/>
<path d="M1235.3 552.5 V564.5 A7.2 3.9 0 0 0 1249.7 564.5 V552.5Z" fill="#3ac46e"/>
<path d="M1247.3 550.0 V562.0 A9.7 5.3 0 0 0 1266.7 562.0 V550.0Z" fill="#3ac46e"/>
<path d="M1261.9 535.0 V547.0 A10.1 5.5 0 0 0 1282.1 547.0 V535.0Z" fill="#3ac46e"/>
<path d="M1247.7 533.5 V545.5 A9.3 5.1 0 0 0 1266.3 545.5 V533.5Z" fill="#3ac46e"/>
<path d="M1231.5 532.0 V544.0 A10.5 5.8 0 0 0 1252.5 544.0 V532.0Z" fill="#3ac46e"/>
<path d="M1211.7 524.0 V536.0 A8.3 4.5 0 0 0 1228.3 536.0 V524.0Z" fill="#3ac46e"/>
<path d="M1189.2 518.0 V530.0 A9.8 5.4 0 0 0 1208.8 530.0 V518.0Z" fill="#3ac46e"/>
<path d="M1176.6 512.0 V524.0 A9.4 5.2 0 0 0 1195.4 524.0 V512.0Z" fill="#3ac46e"/>
<path d="M1168.7 505.0 V517.0 A9.3 5.1 0 0 0 1187.3 517.0 V505.0Z" fill="#3ac46e"/>
<path d="M1163.2 512.0 V524.0 A8.8 4.9 0 0 0 1180.8 524.0 V512.0Z" fill="#3ac46e"/>
<path d="M1148.6 512.5 V524.5 A10.4 5.7 0 0 0 1169.4 524.5 V512.5Z" fill="#3ac46e"/>
<path d="M1135.2 513.0 V525.0 A10.8 5.9 0 0 0 1156.8 525.0 V513.0Z" fill="#3ac46e"/>
<path d="M1136.1 502.0 V514.0 A8.9 4.9 0 0 0 1153.9 514.0 V502.0Z" fill="#3ac46e"/>
<path d="M1125.3 492.0 V504.0 A9.7 5.3 0 0 0 1144.7 504.0 V492.0Z" fill="#3ac46e"/>
<path d="M1114.1 491.7 V503.7 A7.2 4.0 0 0 0 1128.6 503.7 V491.7Z" fill="#3ac46e"/>
<path d="M1097.9 491.3 V503.3 A9.8 5.4 0 0 0 1117.5 503.3 V491.3Z" fill="#3ac46e"/>
<path d="M1084.4 491.0 V503.0 A9.6 5.3 0 0 0 1103.6 503.0 V491.0Z" fill="#3ac46e"/>
<path d="M1094.0 480.0 L1110.0 471.0 L1117.0 466.0 L1132.0 455.0 L1145.0 452.0 L1156.0 455.0 L1172.0 456.0 L1186.0 456.0 L1206.0 458.0 L1224.0 456.0 L1227.0 437.0 L1230.0 421.0 L1238.0 419.0 L1247.0 422.0 L1261.0 425.0 L1273.0 428.0 L1288.0 434.0 L1290.0 440.0 L1284.0 452.0 L1302.0 456.0 L1318.0 459.0 L1329.0 456.0 L1335.0 448.0 L1336.0 441.0 L1353.0 443.0 L1362.0 461.0 L1373.0 470.0 L1393.0 474.0 L1397.0 486.0 L1421.0 483.0 L1439.0 494.0 L1459.0 501.0 L1460.0 521.0 L1470.0 534.0 L1471.0 535.0 L1471.0 535.0 L1459.0 548.0 L1435.0 548.0 L1413.0 553.0 L1404.0 557.0 L1403.0 573.0 L1397.0 586.0 L1388.0 597.0 L1360.0 599.0 L1351.0 617.0 L1335.0 625.0 L1315.0 624.0 L1298.0 613.0 L1298.0 597.0 L1272.0 595.0 L1269.0 578.0 L1247.0 572.0 L1229.0 570.0 L1228.0 555.0 L1257.0 550.0 L1272.0 535.0 L1242.0 532.0 L1220.0 524.0 L1199.0 518.0 L1186.0 512.0 L1178.0 505.0 L1172.0 512.0 L1146.0 513.0 L1145.0 502.0 L1135.0 492.0 L1094.0 491.0Z" fill="#42f27f"/>
<ellipse cx="1094.0" cy="480.0" rx="8.3" ry="4.6" fill="#42f27f"/>
<ellipse cx="1110.0" cy="471.0" rx="7.6" ry="4.2" fill="#42f27f"/>
<ellipse cx="1117.0" cy="466.0" rx="9.6" ry="5.3" fill="#42f27f"/>
<ellipse cx="1132.0" cy="455.0" rx="7.3" ry="4.0" fill="#42f27f"/>
<ellipse cx="1145.0" cy="452.0" rx="9.1" ry="5.0" fill="#42f27f"/>
<ellipse cx="1156.0" cy="455.0" rx="8.5" ry="4.7" fill="#42f27f"/>
<ellipse cx="1172.0" cy="456.0" rx="7.2" ry="4.0" fill="#42f27f"/>
<ellipse cx="1186.0" cy="456.0" rx="9.0" ry="5.0" fill="#42f27f"/>
<ellipse cx="1206.0" cy="458.0" rx="7.1" ry="3.9" fill="#42f27f"/>
<ellipse cx="1224.0" cy="456.0" rx="8.7" ry="4.8" fill="#42f27f"/>
<ellipse cx="1227.0" cy="437.0" rx="7.3" ry="4.0" fill="#42f27f"/>
<ellipse cx="1230.0" cy="421.0" rx="7.4" ry="4.0" fill="#42f27f"/>
<ellipse cx="1238.0" cy="419.0" rx="8.7" ry="4.8" fill="#42f27f"/>
<ellipse cx="1247.0" cy="422.0" rx="10.3" ry="5.7" fill="#42f27f"/>
<ellipse cx="1261.0" cy="425.0" rx="7.5" ry="4.1" fill="#42f27f"/>
<ellipse cx="1273.0" cy="428.0" rx="7.9" ry="4.3" fill="#42f27f"/>
<ellipse cx="1288.0" cy="434.0" rx="9.5" ry="5.2" fill="#42f27f"/>
<ellipse cx="1290.0" cy="440.0" rx="10.8" ry="5.9" fill="#42f27f"/>
<ellipse cx="1284.0" cy="452.0" rx="9.3" ry="5.1" fill="#42f27f"/>
<ellipse cx="1302.0" cy="456.0" rx="8.6" ry="4.7" fill="#42f27f"/>
<ellipse cx="1318.0" cy="459.0" rx="10.9" ry="6.0" fill="#42f27f"/>
<ellipse cx="1329.0" cy="456.0" rx="7.2" ry="4.0" fill="#42f27f"/>
<ellipse cx="1335.0" cy="448.0" rx="10.4" ry="5.7" fill="#42f27f"/>
<ellipse cx="1336.0" cy="441.0" rx="8.2" ry="4.5" fill="#42f27f"/>
<ellipse cx="1353.0" cy="443.0" rx="7.6" ry="4.2" fill="#42f27f"/>
<ellipse cx="1362.0" cy="461.0" rx="7.5" ry="4.1" fill="#42f27f"/>
<ellipse cx="1373.0" cy="470.0" rx="8.2" ry="4.5" fill="#42f27f"/>
<ellipse cx="1393.0" cy="474.0" rx="10.3" ry="5.6" fill="#42f27f"/>
<ellipse cx="1397.0" cy="486.0" rx="7.7" ry="4.2" fill="#42f27f"/>
<ellipse cx="1421.0" cy="483.0" rx="9.3" ry="5.1" fill="#42f27f"/>
<ellipse cx="1439.0" cy="494.0" rx="9.6" ry="5.3" fill="#42f27f"/>
<ellipse cx="1459.0" cy="501.0" rx="8.5" ry="4.7" fill="#42f27f"/>
<ellipse cx="1460.0" cy="521.0" rx="9.2" ry="5.1" fill="#42f27f"/>
<ellipse cx="1470.0" cy="534.0" rx="7.3" ry="4.0" fill="#42f27f"/>
<ellipse cx="1471.0" cy="535.0" rx="7.2" ry="4.0" fill="#42f27f"/>
<ellipse cx="1471.0" cy="535.0" rx="7.8" ry="4.3" fill="#42f27f"/>
<ellipse cx="1459.0" cy="548.0" rx="9.7" ry="5.3" fill="#42f27f"/>
<ellipse cx="1435.0" cy="548.0" rx="8.7" ry="4.8" fill="#42f27f"/>
<ellipse cx="1413.0" cy="553.0" rx="8.3" ry="4.5" fill="#42f27f"/>
<ellipse cx="1404.0" cy="557.0" rx="9.3" ry="5.1" fill="#42f27f"/>
<ellipse cx="1403.0" cy="573.0" rx="8.8" ry="4.8" fill="#42f27f"/>
<ellipse cx="1397.0" cy="586.0" rx="8.2" ry="4.5" fill="#42f27f"/>
<ellipse cx="1388.0" cy="597.0" rx="10.2" ry="5.6" fill="#42f27f"/>
<ellipse cx="1374.0" cy="598.0" rx="9.8" ry="5.4" fill="#42f27f"/>
<ellipse cx="1360.0" cy="599.0" rx="8.0" ry="4.4" fill="#42f27f"/>
<ellipse cx="1351.0" cy="617.0" rx="9.3" ry="5.1" fill="#42f27f"/>
<ellipse cx="1335.0" cy="625.0" rx="9.1" ry="5.0" fill="#42f27f"/>
<ellipse cx="1315.0" cy="624.0" rx="10.5" ry="5.8" fill="#42f27f"/>
<ellipse cx="1298.0" cy="613.0" rx="9.9" ry="5.5" fill="#42f27f"/>
<ellipse cx="1298.0" cy="597.0" rx="8.2" ry="4.5" fill="#42f27f"/>
<ellipse cx="1285.0" cy="596.0" rx="10.9" ry="6.0" fill="#42f27f"/>
<ellipse cx="1272.0" cy="595.0" rx="7.5" ry="4.1" fill="#42f27f"/>
<ellipse cx="1269.0" cy="578.0" rx="8.7" ry="4.8" fill="#42f27f"/>
<ellipse cx="1247.0" cy="572.0" rx="10.0" ry="5.5" fill="#42f27f"/>
<ellipse cx="1229.0" cy="570.0" rx="7.6" ry="4.2" fill="#42f27f"/>
<ellipse cx="1228.0" cy="555.0" rx="9.0" ry="4.9" fill="#42f27f"/>
<ellipse cx="1242.5" cy="552.5" rx="7.2" ry="3.9" fill="#42f27f"/>
<ellipse cx="1257.0" cy="550.0" rx="9.7" ry="5.3" fill="#42f27f"/>
<ellipse cx="1272.0" cy="535.0" rx="10.1" ry="5.5" fill="#42f27f"/>
<ellipse cx="1257.0" cy="533.5" rx="9.3" ry="5.1" fill="#42f27f"/>
<ellipse cx="1242.0" cy="532.0" rx="10.5" ry="5.8" fill="#42f27f"/>
<ellipse cx="1220.0" cy="524.0" rx="8.3" ry="4.5" fill="#42f27f"/>
<ellipse cx="1199.0" cy="518.0" rx="9.8" ry="5.4" fill="#42f27f"/>
<ellipse cx="1186.0" cy="512.0" rx="9.4" ry="5.2" fill="#42f27f"/>
<ellipse cx="1178.0" cy="505.0" rx="9.3" ry="5.1" fill="#42f27f"/>
<ellipse cx="1172.0" cy="512.0" rx="8.8" ry="4.9" fill="#42f27f"/>
<ellipse cx="1159.0" cy="512.5" rx="10.4" ry="5.7" fill="#42f27f"/>
<ellipse cx="1146.0" cy="513.0" rx="10.8" ry="5.9" fill="#42f27f"/>
<ellipse cx="1145.0" cy="502.0" rx="8.9" ry="4.9" fill="#42f27f"/>
<ellipse cx="1135.0" cy="492.0" rx="9.7" ry="5.3" fill="#42f27f"/>
<ellipse cx="1121.3" cy="491.7" rx="7.2" ry="4.0" fill="#42f27f"/>
<ellipse cx="1107.7" cy="491.3" rx="9.8" ry="5.4" fill="#42f27f"/>
<ellipse cx="1094.0" cy="491.0" rx="9.6" ry="5.3" fill="#42f27f"/>
<clipPath id="cl"><path d="M1094.0 480.0 L1110.0 471.0 L1117.0 466.0 L1132.0 455.0 L1145.0 452.0 L1156.0 455.0 L1172.0 456.0 L1186.0 456.0 L1206.0 458.0 L1224.0 456.0 L1227.0 437.0 L1230.0 421.0 L1238.0 419.0 L1247.0 422.0 L1261.0 425.0 L1273.0 428.0 L1288.0 434.0 L1290.0 440.0 L1284.0 452.0 L1302.0 456.0 L1318.0 459.0 L1329.0 456.0 L1335.0 448.0 L1336.0 441.0 L1353.0 443.0 L1362.0 461.0 L1373.0 470.0 L1393.0 474.0 L1397.0 486.0 L1421.0 483.0 L1439.0 494.0 L1459.0 501.0 L1460.0 521.0 L1470.0 534.0 L1471.0 535.0 L1471.0 535.0 L1459.0 548.0 L1435.0 548.0 L1413.0 553.0 L1404.0 557.0 L1403.0 573.0 L1397.0 586.0 L1388.0 597.0 L1360.0 599.0 L1351.0 617.0 L1335.0 625.0 L1315.0 624.0 L1298.0 613.0 L1298.0 597.0 L1272.0 595.0 L1269.0 578.0 L1247.0 572.0 L1229.0 570.0 L1228.0 555.0 L1257.0 550.0 L1272.0 535.0 L1242.0 532.0 L1220.0 524.0 L1199.0 518.0 L1186.0 512.0 L1178.0 505.0 L1172.0 512.0 L1146.0 513.0 L1145.0 502.0 L1135.0 492.0 L1094.0 491.0Z"/></clipPath>
<g clip-path="url(#cl)">
<path d="M1229 426.75 V442.25 A15.5 7.75 0 0 0 1260 442.25 V426.75Z" fill="#3ac46e"/><ellipse cx="1244.5" cy="426.75" rx="15.5" ry="7.75" fill="#42f27f"/>
<path d="M1255 431.75 V443.25 A17.5 8.75 0 0 0 1290 443.25 V431.75Z" fill="#3ac46e"/><ellipse cx="1272.5" cy="431.75" rx="17.5" ry="8.75" fill="#42f27f"/>
<path d="M1300 454.5 V461.5 A13.0 6.5 0 0 0 1326 461.5 V454.5Z" fill="#3ac46e"/><ellipse cx="1313.0" cy="454.5" rx="13.0" ry="6.5" fill="#42f27f"/>
<path d="M1340 447.5 V459.5 A11.0 5.5 0 0 0 1362 459.5 V447.5Z" fill="#3ac46e"/><ellipse cx="1351.0" cy="447.5" rx="11.0" ry="5.5" fill="#42f27f"/>
<path d="M1362 468.5 V479.5 A17.0 8.5 0 0 0 1396 479.5 V468.5Z" fill="#3ac46e"/><ellipse cx="1379.0" cy="468.5" rx="17.0" ry="8.5" fill="#42f27f"/>
<path d="M1395 490.5 V495.5 A15.0 7.5 0 0 0 1425 495.5 V490.5Z" fill="#3ac46e"/><ellipse cx="1410.0" cy="490.5" rx="15.0" ry="7.5" fill="#42f27f"/>
<path d="M1140 459.5 V464.5 A15.0 7.5 0 0 0 1170 464.5 V459.5Z" fill="#3ac46e"/><ellipse cx="1155.0" cy="459.5" rx="15.0" ry="7.5" fill="#42f27f"/>
<path d="M1170 461.5 V466.5 A15.0 7.5 0 0 0 1200 466.5 V461.5Z" fill="#3ac46e"/><ellipse cx="1185.0" cy="461.5" rx="15.0" ry="7.5" fill="#42f27f"/>
<path d="M1200 491.0 V495.0 A14.0 7.0 0 0 0 1228 495.0 V491.0Z" fill="#3ac46e"/><ellipse cx="1214.0" cy="491.0" rx="14.0" ry="7.0" fill="#42f27f"/>
<path d="M1230 502.0 V504.0 A16.0 8.0 0 0 0 1262 504.0 V502.0Z" fill="#3ac46e"/><ellipse cx="1246.0" cy="502.0" rx="16.0" ry="8.0" fill="#42f27f"/>
<path d="M1330 511.5 V516.5 A15.0 7.5 0 0 0 1360 516.5 V511.5Z" fill="#3ac46e"/><ellipse cx="1345.0" cy="511.5" rx="15.0" ry="7.5" fill="#42f27f"/>
<path d="M1370 521.5 V526.5 A15.0 7.5 0 0 0 1400 526.5 V521.5Z" fill="#3ac46e"/><ellipse cx="1385.0" cy="521.5" rx="15.0" ry="7.5" fill="#42f27f"/>
<path d="M1420 516.5 V522.5 A15.0 7.5 0 0 0 1450 522.5 V516.5Z" fill="#3ac46e"/><ellipse cx="1435.0" cy="516.5" rx="15.0" ry="7.5" fill="#42f27f"/>
<path d="M1300 573.5 V577.5 A15.0 7.5 0 0 0 1330 577.5 V573.5Z" fill="#3ac46e"/><ellipse cx="1315.0" cy="573.5" rx="15.0" ry="7.5" fill="#42f27f"/>
<path d="M1340 577.75 V581.25 A17.5 8.75 0 0 0 1375 581.25 V577.75Z" fill="#3ac46e"/><ellipse cx="1357.5" cy="577.75" rx="17.5" ry="8.75" fill="#42f27f"/>
<path d="M1375 556.5 V560.5 A15.0 7.5 0 0 0 1405 560.5 V556.5Z" fill="#3ac46e"/><ellipse cx="1390.0" cy="556.5" rx="15.0" ry="7.5" fill="#42f27f"/>
<path d="M1250 556.5 V559.5 A15.0 7.5 0 0 0 1280 559.5 V556.5Z" fill="#3ac46e"/><ellipse cx="1265.0" cy="556.5" rx="15.0" ry="7.5" fill="#42f27f"/>
<path d="M1210 531.5 V534.5 A15.0 7.5 0 0 0 1240 534.5 V531.5Z" fill="#3ac46e"/><ellipse cx="1225.0" cy="531.5" rx="15.0" ry="7.5" fill="#42f27f"/>
<path d="M1150 511.5 V513.5 A15.0 7.5 0 0 0 1180 513.5 V511.5Z" fill="#3ac46e"/><ellipse cx="1165.0" cy="511.5" rx="15.0" ry="7.5" fill="#42f27f"/>
<path d="M1310 612.75 V615.25 A17.5 8.75 0 0 0 1345 615.25 V612.75Z" fill="#3ac46e"/><ellipse cx="1327.5" cy="612.75" rx="17.5" ry="8.75" fill="#42f27f"/>
<path d="M1360 599.5 V601.5 A15.0 7.5 0 0 0 1390 601.5 V599.5Z" fill="#3ac46e"/><ellipse cx="1375.0" cy="599.5" rx="15.0" ry="7.5" fill="#42f27f"/>
<path d="M1400 541.5 V545.5 A15.0 7.5 0 0 0 1430 545.5 V541.5Z" fill="#3ac46e"/><ellipse cx="1415.0" cy="541.5" rx="15.0" ry="7.5" fill="#42f27f"/>
<path d="M1110 482.5 V486.5 A15.0 7.5 0 0 0 1140 486.5 V482.5Z" fill="#3ac46e"/><ellipse cx="1125.0" cy="482.5" rx="15.0" ry="7.5" fill="#42f27f"/>
<path d="M1270 477.5 V481.5 A15.0 7.5 0 0 0 1300 481.5 V477.5Z" fill="#3ac46e"/><ellipse cx="1285.0" cy="477.5" rx="15.0" ry="7.5" fill="#42f27f"/>
<path d="M1287 506.5 V524.5 A13.0 6.5 0 0 0 1313 524.5 V506.5Z" fill="#3ac46e"/><ellipse cx="1300.0" cy="506.5" rx="13.0" ry="6.5" fill="#42f27f"/>
<path d="M1320 537.5 V542.5 A15.0 7.5 0 0 0 1350 542.5 V537.5Z" fill="#3ac46e"/><ellipse cx="1335.0" cy="537.5" rx="15.0" ry="7.5" fill="#42f27f"/>
<path d="M1350 548.75 V549.25 A17.5 8.75 0 0 0 1385 549.25 V548.75Z" fill="#3ac46e"/><ellipse cx="1367.5" cy="548.75" rx="17.5" ry="8.75" fill="#42f27f"/>
<path d="M1265 587.5 V590.5 A15.0 7.5 0 0 0 1295 590.5 V587.5Z" fill="#3ac46e"/><ellipse cx="1280.0" cy="587.5" rx="15.0" ry="7.5" fill="#42f27f"/>
<path d="M1240 527.5 V528.5 A15.0 7.5 0 0 0 1270 528.5 V527.5Z" fill="#3ac46e"/><ellipse cx="1255.0" cy="527.5" rx="15.0" ry="7.5" fill="#42f27f"/>
<path d="M1180 497.5 V498.5 A15.0 7.5 0 0 0 1210 498.5 V497.5Z" fill="#3ac46e"/><ellipse cx="1195.0" cy="497.5" rx="15.0" ry="7.5" fill="#42f27f"/>
<path d="M1430 497.0 V501.0 A14.0 7.0 0 0 0 1458 501.0 V497.0Z" fill="#3ac46e"/><ellipse cx="1444.0" cy="497.0" rx="14.0" ry="7.0" fill="#42f27f"/>
<path d="M1100 496.25 V498.75 A12.5 6.25 0 0 0 1125 498.75 V496.25Z" fill="#3ac46e"/><ellipse cx="1112.5" cy="496.25" rx="12.5" ry="6.25" fill="#42f27f"/>
<path d="M1200 466.25 V469.75 A12.5 6.25 0 0 0 1225 469.75 V466.25Z" fill="#3ac46e"/><ellipse cx="1212.5" cy="466.25" rx="12.5" ry="6.25" fill="#42f27f"/>
<path d="M1186.9 543.4 l7.0 0.6" stroke="#33b060" stroke-width="0.9" opacity="0.6"/>
<path d="M1328.4 452.5 l4.1 2.0" stroke="#33b060" stroke-width="0.9" opacity="0.6"/>
<path d="M1194.7 484.5 l12.0 -0.2" stroke="#33b060" stroke-width="0.9" opacity="0.6"/>
<path d="M1405.3 530.5 l9.1 -2.1" stroke="#33b060" stroke-width="0.9" opacity="0.6"/>
<path d="M1331.7 604.9 l8.2 1.4" stroke="#33b060" stroke-width="0.9" opacity="0.6"/>
<path d="M1345.1 452.2 l10.1 0.5" stroke="#33b060" stroke-width="0.9" opacity="0.6"/>
<path d="M1210.0 445.9 l10.9 -0.2" stroke="#33b060" stroke-width="0.9" opacity="0.6"/>
<path d="M1362.4 607.0 l9.7 2.5" stroke="#33b060" stroke-width="0.9" opacity="0.6"/>
<path d="M1244.2 592.2 l7.6 2.6" stroke="#33b060" stroke-width="0.9" opacity="0.6"/>
<path d="M1420.8 458.5 l5.1 -1.7" stroke="#33b060" stroke-width="0.9" opacity="0.6"/>
<path d="M1452.4 522.9 l9.0 -1.2" stroke="#33b060" stroke-width="0.9" opacity="0.6"/>
<path d="M1285.1 513.3 l6.8 0.5" stroke="#33b060" stroke-width="0.9" opacity="0.6"/>
<path d="M1313.3 611.8 l9.5 2.6" stroke="#33b060" stroke-width="0.9" opacity="0.6"/>
<path d="M1412.6 628.3 l9.4 -2.0" stroke="#33b060" stroke-width="0.9" opacity="0.6"/>
<path d="M1414.1 623.3 l11.2 0.4" stroke="#33b060" stroke-width="0.9" opacity="0.6"/>
<path d="M1360.5 480.1 l10.7 0.4" stroke="#33b060" stroke-width="0.9" opacity="0.6"/>
<path d="M1204.0 452.1 l10.8 2.9" stroke="#33b060" stroke-width="0.9" opacity="0.6"/>
<path d="M1132.3 592.1 l7.3 -2.1" stroke="#33b060" stroke-width="0.9" opacity="0.6"/>
<path d="M1207.3 586.1 l11.0 -2.7" stroke="#33b060" stroke-width="0.9" opacity="0.6"/>
<path d="M1324.3 448.5 l9.7 -1.0" stroke="#33b060" stroke-width="0.9" opacity="0.6"/>
<path d="M1421.5 626.3 l8.0 3.0" stroke="#33b060" stroke-width="0.9" opacity="0.6"/>
<path d="M1213.0 454.6 l8.8 -2.8" stroke="#33b060" stroke-width="0.9" opacity="0.6"/>
<path d="M1172.0 517.5 l8.9 -2.1" stroke="#33b060" stroke-width="0.9" opacity="0.6"/>
<path d="M1115.5 604.9 l6.5 2.8" stroke="#33b060" stroke-width="0.9" opacity="0.6"/>
<path d="M1427.3 511.8 l7.7 0.1" stroke="#33b060" stroke-width="0.9" opacity="0.6"/>
<path d="M1335.0 553.2 l8.5 0.7" stroke="#33b060" stroke-width="0.9" opacity="0.6"/>
<path d="M1443.3 536.3 l7.4 1.3" stroke="#33b060" stroke-width="0.9" opacity="0.6"/>
<path d="M1186.7 497.2 l11.8 0.1" stroke="#33b060" stroke-width="0.9" opacity="0.6"/>
<path d="M1300.2 442.2 l7.3 0.5" stroke="#33b060" stroke-width="0.9" opacity="0.6"/>
<path d="M1107.3 557.0 l9.1 -2.6" stroke="#33b060" stroke-width="0.9" opacity="0.6"/>
<path d="M1329.0 528.6 l9.4 -0.9" stroke="#33b060" stroke-width="0.9" opacity="0.6"/>
<path d="M1358.0 580.2 l4.2 -2.6" stroke="#33b060" stroke-width="0.9" opacity="0.6"/>
<path d="M1346.7 623.0 l6.0 -0.3" stroke="#33b060" stroke-width="0.9" opacity="0.6"/>
<path d="M1316.3 500.8 l6.9 -1.1" stroke="#33b060" stroke-width="0.9" opacity="0.6"/>
<path d="M1234.7 553.2 l6.4 -0.7" stroke="#33b060" stroke-width="0.9" opacity="0.6"/>
<path d="M1381.9 445.1 l8.6 1.4" stroke="#33b060" stroke-width="0.9" opacity="0.6"/>
<path d="M1213.2 482.3 l10.4 -1.6" stroke="#33b060" stroke-width="0.9" opacity="0.6"/>
<path d="M1168.4 522.7 l9.6 -2.4" stroke="#33b060" stroke-width="0.9" opacity="0.6"/>
<path d="M1217.5 503.4 l10.7 -0.4" stroke="#33b060" stroke-width="0.9" opacity="0.6"/>
<path d="M1412.3 472.2 l6.7 0.9" stroke="#33b060" stroke-width="0.9" opacity="0.6"/>
<path d="M1423.0 525.7 l5.8 -2.3" stroke="#33b060" stroke-width="0.9" opacity="0.6"/>
<path d="M1293.3 476.3 l10.5 2.0" stroke="#33b060" stroke-width="0.9" opacity="0.6"/>
<path d="M1167.0 492.9 l10.5 0.9" stroke="#33b060" stroke-width="0.9" opacity="0.6"/>
<path d="M1394.3 505.6 l5.0 -1.2" stroke="#33b060" stroke-width="0.9" opacity="0.6"/>
<path d="M1389.8 491.5 l6.8 -0.5" stroke="#33b060" stroke-width="0.9" opacity="0.6"/>
<path d="M1253.2 517.8 l11.4 -2.1" stroke="#33b060" stroke-width="0.9" opacity="0.6"/>
<path d="M1101.7 619.2 l11.0 2.9" stroke="#33b060" stroke-width="0.9" opacity="0.6"/>
<path d="M1258.5 620.5 l11.4 -1.7" stroke="#33b060" stroke-width="0.9" opacity="0.6"/>
<path d="M1372.1 599.0 l9.3 0.1" stroke="#33b060" stroke-width="0.9" opacity="0.6"/>
<path d="M1205.5 504.8 l5.8 -2.6" stroke="#33b060" stroke-width="0.9" opacity="0.6"/>
<path d="M1314.9 494.5 l10.5 -2.7" stroke="#33b060" stroke-width="0.9" opacity="0.6"/>
<path d="M1429.8 571.8 l11.4 2.4" stroke="#33b060" stroke-width="0.9" opacity="0.6"/>
<path d="M1428.4 549.6 l4.1 1.5" stroke="#33b060" stroke-width="0.9" opacity="0.6"/>
<path d="M1162.7 497.0 l9.3 0.1" stroke="#33b060" stroke-width="0.9" opacity="0.6"/>
<path d="M1251.0 618.4 l8.9 -1.0" stroke="#33b060" stroke-width="0.9" opacity="0.6"/>
<path d="M1192.2 603.7 l7.8 1.7" stroke="#33b060" stroke-width="0.9" opacity="0.6"/>
<path d="M1228.4 477.5 l8.3 1.9" stroke="#33b060" stroke-width="0.9" opacity="0.6"/>
<path d="M1162.5 590.4 l11.4 1.8" stroke="#33b060" stroke-width="0.9" opacity="0.6"/>
<path d="M1400.6 441.4 l9.0 2.2" stroke="#33b060" stroke-width="0.9" opacity="0.6"/>
<path d="M1118.2 491.6 l6.1 0.2" stroke="#33b060" stroke-width="0.9" opacity="0.6"/>
<path d="M1254.4 529.9 l10.2 -3.0" stroke="#33b060" stroke-width="0.9" opacity="0.6"/>
<path d="M1120.0 464.1 l5.0 -2.6" stroke="#33b060" stroke-width="0.9" opacity="0.6"/>
<path d="M1455.8 602.3 l4.7 0.0" stroke="#33b060" stroke-width="0.9" opacity="0.6"/>
<path d="M1215.3 499.8 l6.8 0.9" stroke="#33b060" stroke-width="0.9" opacity="0.6"/>
<path d="M1314.1 508.6 l5.5 -1.0" stroke="#33b060" stroke-width="0.9" opacity="0.6"/>
<path d="M1145.2 545.5 l9.7 -0.7" stroke="#33b060" stroke-width="0.9" opacity="0.6"/>
<path d="M1129.2 473.9 l7.0 0.6" stroke="#33b060" stroke-width="0.9" opacity="0.6"/>
<path d="M1385.7 512.3 l10.4 0.7" stroke="#33b060" stroke-width="0.9" opacity="0.6"/>
<path d="M1257.5 510.8 l8.0 1.2" stroke="#33b060" stroke-width="0.9" opacity="0.6"/>
<path d="M1253.5 571.9 l7.7 -1.5" stroke="#33b060" stroke-width="0.9" opacity="0.6"/>
<path d="M1295.6 572.1 l4.6 -0.5" stroke="#33b060" stroke-width="0.9" opacity="0.6"/>
<path d="M1255.4 607.1 l11.5 -0.8" stroke="#33b060" stroke-width="0.9" opacity="0.6"/>
<path d="M1427.7 590.3 l6.1 -0.2" stroke="#33b060" stroke-width="0.9" opacity="0.6"/>
<path d="M1144.9 594.5 l9.3 2.3" stroke="#33b060" stroke-width="0.9" opacity="0.6"/>
<path d="M1389.3 566.8 l9.9 0.4" stroke="#33b060" stroke-width="0.9" opacity="0.6"/>
<path d="M1137.6 551.7 l4.0 -2.1" stroke="#33b060" stroke-width="0.9" opacity="0.6"/>
<path d="M1382.6 448.4 l4.7 -2.4" stroke="#33b060" stroke-width="0.9" opacity="0.6"/>
<path d="M1421.4 474.0 l4.2 2.0" stroke="#33b060" stroke-width="0.9" opacity="0.6"/>
<path d="M1144.3 600.3 l9.4 2.0" stroke="#33b060" stroke-width="0.9" opacity="0.6"/>
<path d="M1447.6 550.0 l10.4 -2.8" stroke="#33b060" stroke-width="0.9" opacity="0.6"/>
<path d="M1380.1 537.2 l9.7 -2.4" stroke="#33b060" stroke-width="0.9" opacity="0.6"/>
<path d="M1373.4 617.6 l4.5 -1.1" stroke="#33b060" stroke-width="0.9" opacity="0.6"/>
<path d="M1305.9 597.3 l5.9 -1.9" stroke="#33b060" stroke-width="0.9" opacity="0.6"/>
<path d="M1191.2 557.0 l10.0 -0.6" stroke="#33b060" stroke-width="0.9" opacity="0.6"/>
<path d="M1234.1 515.4 l6.8 -0.5" stroke="#33b060" stroke-width="0.9" opacity="0.6"/>
<path d="M1130.4 535.1 l11.8 -0.5" stroke="#33b060" stroke-width="0.9" opacity="0.6"/>
<path d="M1372.8 470.5 l9.5 1.5" stroke="#33b060" stroke-width="0.9" opacity="0.6"/>
<path d="M1346.0 538.2 l7.9 0.9" stroke="#33b060" stroke-width="0.9" opacity="0.6"/>
<path d="M1427.6 468.4 l4.8 1.5" stroke="#33b060" stroke-width="0.9" opacity="0.6"/>
<path d="M1434.6 538.3 l7.5 1.3" stroke="#33b060" stroke-width="0.9" opacity="0.6"/>
<path d="M1167.9 490.8 l5.6 0.5" stroke="#33b060" stroke-width="0.9" opacity="0.6"/>
<path d="M1214.9 484.1 l9.5 2.7" stroke="#33b060" stroke-width="0.9" opacity="0.6"/>
<path d="M1208.0 574.0 l7.3 2.1" stroke="#33b060" stroke-width="0.9" opacity="0.6"/>
<path d="M1313.4 490.8 l5.7 -2.9" stroke="#33b060" stroke-width="0.9" opacity="0.6"/>
<path d="M1275.0 512.7 l5.4 -0.8" stroke="#33b060" stroke-width="0.9" opacity="0.6"/>
<path d="M1217.5 587.1 l5.1 2.9" stroke="#33b060" stroke-width="0.9" opacity="0.6"/>
<path d="M1275.1 553.8 l7.7 2.0" stroke="#33b060" stroke-width="0.9" opacity="0.6"/>
<path d="M1399.9 545.9 l7.9 1.3" stroke="#33b060" stroke-width="0.9" opacity="0.6"/>
<path d="M1412.7 516.0 l9.9 2.8" stroke="#33b060" stroke-width="0.9" opacity="0.6"/>
<path d="M1270.6 483.6 l5.9 1.3" stroke="#33b060" stroke-width="0.9" opacity="0.6"/>
<path d="M1346.5 622.2 l10.8 -1.5" stroke="#33b060" stroke-width="0.9" opacity="0.6"/>
<path d="M1169.2 489.1 l5.5 1.2" stroke="#33b060" stroke-width="0.9" opacity="0.6"/>
<path d="M1413.4 611.0 l6.0 2.2" stroke="#33b060" stroke-width="0.9" opacity="0.6"/>
<path d="M1214.4 520.4 l9.8 -2.5" stroke="#33b060" stroke-width="0.9" opacity="0.6"/>
<path d="M1133.8 598.4 l6.3 -0.9" stroke="#33b060" stroke-width="0.9" opacity="0.6"/>
<path d="M1311.8 568.3 l4.1 -1.0" stroke="#33b060" stroke-width="0.9" opacity="0.6"/>
<path d="M1259.2 532.3 l5.7 0.5" stroke="#33b060" stroke-width="0.9" opacity="0.6"/>
<path d="M1448.7 514.3 l8.4 -2.3" stroke="#33b060" stroke-width="0.9" opacity="0.6"/>
<path d="M1200.3 566.4 l4.9 2.3" stroke="#33b060" stroke-width="0.9" opacity="0.6"/>
<path d="M1431.7 458.4 l11.5 -0.8" stroke="#33b060" stroke-width="0.9" opacity="0.6"/>
<path d="M1381.9 583.9 l6.4 1.1" stroke="#33b060" stroke-width="0.9" opacity="0.6"/>
<path d="M1338.7 593.2 l6.1 1.5" stroke="#33b060" stroke-width="0.9" opacity="0.6"/>
<path d="M1450.9 567.8 l8.3 -2.3" stroke="#33b060" stroke-width="0.9" opacity="0.6"/>
<path d="M1280.3 506.9 l9.7 1.1" stroke="#33b060" stroke-width="0.9" opacity="0.6"/>
<path d="M1306.7 474.6 l9.2 0.8" stroke="#33b060" stroke-width="0.9" opacity="0.6"/>
<path d="M1165.4 609.1 l9.2 -2.3" stroke="#33b060" stroke-width="0.9" opacity="0.6"/>
<path d="M1440.1 466.9 l6.7 1.3" stroke="#33b060" stroke-width="0.9" opacity="0.6"/>
<path d="M1318.1 545.4 l9.2 -0.3" stroke="#33b060" stroke-width="0.9" opacity="0.6"/>
<path d="M1214.0 473.5 l4.5 1.3" stroke="#33b060" stroke-width="0.9" opacity="0.6"/>
<path d="M1375.4 543.2 l9.9 -0.8" stroke="#33b060" stroke-width="0.9" opacity="0.6"/>
<path d="M1197.0 512.8 l11.0 -2.7" stroke="#33b060" stroke-width="0.9" opacity="0.6"/>
<path d="M1284.2 487.0 l10.2 -0.9" stroke="#33b060" stroke-width="0.9" opacity="0.6"/>
<path d="M1221.5 516.6 l8.3 1.6" stroke="#33b060" stroke-width="0.9" opacity="0.6"/>
<path d="M1228.8 600.9 l4.9 -1.4" stroke="#33b060" stroke-width="0.9" opacity="0.6"/>
<path d="M1136.4 461.4 l10.2 1.4" stroke="#33b060" stroke-width="0.9" opacity="0.6"/>
<path d="M1167.5 475.9 l7.3 1.5" stroke="#33b060" stroke-width="0.9" opacity="0.6"/>
<path d="M1397.7 582.3 l8.7 -2.1" stroke="#33b060" stroke-width="0.9" opacity="0.6"/>
<path d="M1245.4 476.8 l8.2 0.4" stroke="#33b060" stroke-width="0.9" opacity="0.6"/>
<path d="M1173.8 487.5 l10.3 -2.8" stroke="#33b060" stroke-width="0.9" opacity="0.6"/>
<path d="M1393.2 609.3 l11.6 -0.7" stroke="#33b060" stroke-width="0.9" opacity="0.6"/>
<path d="M1301.7 550.8 l9.1 2.9" stroke="#33b060" stroke-width="0.9" opacity="0.6"/>
<path d="M1350.6 496.9 l10.9 -0.1" stroke="#33b060" stroke-width="0.9" opacity="0.6"/>
<path d="M1319.5 578.1 l4.0 1.6" stroke="#33b060" stroke-width="0.9" opacity="0.6"/>
<path d="M1341.6 533.5 l8.2 -0.2" stroke="#33b060" stroke-width="0.9" opacity="0.6"/>
<path d="M1170.6 540.6 l4.3 0.0" stroke="#33b060" stroke-width="0.9" opacity="0.6"/>
<path d="M1335.8 524.4 l8.5 2.8" stroke="#33b060" stroke-width="0.9" opacity="0.6"/>
<path d="M1425.6 465.8 l10.3 0.7" stroke="#33b060" stroke-width="0.9" opacity="0.6"/>
<path d="M1118.5 508.4 l5.9 -2.5" stroke="#33b060" stroke-width="0.9" opacity="0.6"/>
<path d="M1296.7 616.7 l6.6 2.2" stroke="#33b060" stroke-width="0.9" opacity="0.6"/>
<path d="M1353.6 465.5 l10.9 0.6" stroke="#33b060" stroke-width="0.9" opacity="0.6"/>
<path d="M1438.3 576.0 l9.9 -0.9" stroke="#33b060" stroke-width="0.9" opacity="0.6"/>
<path d="M1394.4 617.0 l10.9 -0.4" stroke="#33b060" stroke-width="0.9" opacity="0.6"/>
<path d="M1376.3 532.2 l4.9 -2.7" stroke="#33b060" stroke-width="0.9" opacity="0.6"/>
<path d="M1128.4 478.1 l5.3 -0.0" stroke="#33b060" stroke-width="0.9" opacity="0.6"/>
<path d="M1355.2 542.1 l7.4 0.9" stroke="#33b060" stroke-width="0.9" opacity="0.6"/>
<path d="M1211.2 528.2 l10.1 -0.6" stroke="#33b060" stroke-width="0.9" opacity="0.6"/>
<path d="M1165.9 610.9 l9.8 -0.8" stroke="#33b060" stroke-width="0.9" opacity="0.6"/>
<path d="M1235.4 540.6 l8.8 -1.7" stroke="#33b060" stroke-width="0.9" opacity="0.6"/>
<path d="M1101.0 479.7 l10.3 -2.1" stroke="#33b060" stroke-width="0.9" opacity="0.6"/>
<path d="M1267.9 477.1 l5.7 -2.0" stroke="#33b060" stroke-width="0.9" opacity="0.6"/>
<path d="M1247.4 472.0 l4.2 -2.3" stroke="#33b060" stroke-width="0.9" opacity="0.6"/>
<path d="M1161.4 533.2 l4.5 -2.9" stroke="#33b060" stroke-width="0.9" opacity="0.6"/>
<path d="M1263.5 517.5 l9.6 -2.7" stroke="#33b060" stroke-width="0.9" opacity="0.6"/>
<path d="M1247.2 515.4 l4.2 2.8" stroke="#33b060" stroke-width="0.9" opacity="0.6"/>
<path d="M1179.9 457.9 l7.8 -2.0" stroke="#33b060" stroke-width="0.9" opacity="0.6"/>
<path d="M1327.2 505.8 l5.0 -2.7" stroke="#33b060" stroke-width="0.9" opacity="0.6"/>
<path d="M1365.6 492.3 l10.3 -0.2" stroke="#33b060" stroke-width="0.9" opacity="0.6"/>
<path d="M1440.5 497.1 l6.0 -1.4" stroke="#33b060" stroke-width="0.9" opacity="0.6"/>
<path d="M1397.4 559.5 l6.8 -2.4" stroke="#33b060" stroke-width="0.9" opacity="0.6"/>
<path d="M1349.1 624.2 l8.7 -3.0" stroke="#33b060" stroke-width="0.9" opacity="0.6"/>
</g>
<path d="M1000 474.2 V509.8 A13.0 5.2 0 0 0 1026 509.8 V474.2Z" fill="#3ac46e"/><ellipse cx="1013.0" cy="474.2" rx="13.0" ry="5.2" fill="#42f27f"/>
<path d="M1053 483.8 V509.2 A12.0 4.800000000000001 0 0 0 1077 509.2 V483.8Z" fill="#3ac46e"/><ellipse cx="1065.0" cy="483.8" rx="12.0" ry="4.800000000000001" fill="#42f27f"/>
<path d="M1064 467.2 V490.8 A13.0 5.2 0 0 0 1090 490.8 V467.2Z" fill="#3ac46e"/><ellipse cx="1077.0" cy="467.2" rx="13.0" ry="5.2" fill="#42f27f"/>
<path d="M1166 350.2 V368.8 A8.0 3.2 0 0 0 1182 368.8 V350.2Z" fill="#3ac46e"/><ellipse cx="1174.0" cy="350.2" rx="8.0" ry="3.2" fill="#42f27f"/>
<path d="M1173 377.2 V386.8 A8.0 3.2 0 0 0 1189 386.8 V377.2Z" fill="#3ac46e"/><ellipse cx="1181.0" cy="377.2" rx="8.0" ry="3.2" fill="#42f27f"/>
<path d="M1184 418.6 V427.4 A9.0 3.6 0 0 0 1202 427.4 V418.6Z" fill="#3ac46e"/><ellipse cx="1193.0" cy="418.6" rx="9.0" ry="3.6" fill="#42f27f"/>
<path d="M1208 413.6 V428.4 A9.0 3.6 0 0 0 1226 428.4 V413.6Z" fill="#3ac46e"/><ellipse cx="1217.0" cy="413.6" rx="9.0" ry="3.6" fill="#42f27f"/>
<path d="M1350 614.4 V626.6 A8.5 3.4000000000000004 0 0 0 1367 626.6 V614.4Z" fill="#c8a64e"/><ellipse cx="1358.5" cy="614.4" rx="8.5" ry="3.4000000000000004" fill="#e8cf62"/>
<ellipse cx="1249" cy="556" rx="11" ry="6" fill="#e8cf62"/>
<ellipse cx="1355" cy="495" rx="8" ry="4.5" fill="#e8cf62"/>
<path d="M1144 470l4 -3 2 5 -3 5z" fill="#e8cf62"/>
<ellipse cx="1389" cy="599" rx="2.5" ry="3.5" fill="#e8cf62"/>
<path d="M1182.0 452.0 C1184.8 455.2 1192.8 464.8 1199.0 471.0 C1205.2 477.2 1208.8 479.2 1219.0 489.0 C1229.2 498.8 1247.7 518.2 1260.0 530.0 C1272.3 541.8 1283.0 548.3 1293.0 560.0 C1303.0 571.7 1312.8 587.2 1320.0 600.0 C1327.2 612.8 1333.3 630.8 1336.0 637.0" fill="none" stroke="#10dd5c" stroke-width="4.2"/>
<path d="M1182.0 452.0 C1184.8 455.2 1192.8 464.8 1199.0 471.0 C1205.2 477.2 1208.8 479.2 1219.0 489.0 C1229.2 498.8 1247.7 518.2 1260.0 530.0 C1272.3 541.8 1283.0 548.3 1293.0 560.0 C1303.0 571.7 1312.8 587.2 1320.0 600.0 C1327.2 612.8 1333.3 630.8 1336.0 637.0" fill="none" stroke="#5cf59a" stroke-width="1.3"/>
<path d="M1128.0 515.0 C1135.3 513.8 1161.0 509.8 1172.0 508.0 C1183.0 506.2 1182.7 506.8 1194.0 504.0 C1205.3 501.2 1228.3 496.7 1240.0 491.0 C1251.7 485.3 1257.2 476.7 1264.0 470.0 C1270.8 463.3 1276.5 457.3 1281.0 451.0 C1285.5 444.7 1287.8 436.3 1291.0 432.0 C1294.2 427.7 1298.5 426.2 1300.0 425.0" fill="none" stroke="#10dd5c" stroke-width="3.5" opacity="0.7"/>
<path d="M1372.0 430.0 C1376.7 432.7 1390.7 441.8 1400.0 446.0 C1409.3 450.2 1419.7 451.5 1428.0 455.0 C1436.3 458.5 1445.3 462.5 1450.0 467.0 C1454.7 471.5 1454.7 474.8 1456.0 482.0 C1457.3 489.2 1457.8 503.0 1458.0 510.0 C1458.2 517.0 1457.2 521.7 1457.0 524.0" fill="none" stroke="#10dd5c" stroke-width="3.5" opacity="0.6"/>
<path d="M957 577 Q969.5 573 982 577 L982 588.4 Q982 595 969.5 598 Q957 595 957 588.4Z" fill="#fafafa" stroke="#b5b5b5" stroke-width="1"/><text x="969.5" y="589.2" text-anchor="middle" font-size="9" font-weight="bold" fill="#555">6</text>
<path d="M1105 507 Q1116.5 503 1128 507 L1128 517.8 Q1128 524 1116.5 527 Q1105 524 1105 517.8Z" fill="#fafafa" stroke="#b5b5b5" stroke-width="1"/><text x="1116.5" y="518.7" text-anchor="middle" font-size="9" font-weight="bold" fill="#555">6</text>
<path d="M1254 460 Q1264.5 456 1275 460 L1275 469.6 Q1275 475 1264.5 478 Q1254 475 1254 469.6Z" fill="#fafafa" stroke="#b5b5b5" stroke-width="1"/><text x="1264.5" y="470.7" text-anchor="middle" font-size="9" font-weight="bold" fill="#555">6</text>
<rect x="1159" y="435" width="22" height="15" rx="3" fill="#f7f7f7" stroke="#b5b5b5" stroke-width="1"/><text x="1170.0" y="445.7" text-anchor="middle" font-size="9" font-weight="bold" fill="#555">63</text>
<rect x="1293" y="555" width="25" height="16" rx="3" fill="#f7f7f7" stroke="#b5b5b5" stroke-width="1"/><text x="1305.5" y="566.2" text-anchor="middle" font-size="9" font-weight="bold" fill="#555">63</text>
<rect x="1458" y="593" width="26" height="17" rx="3" fill="#f7f7f7" stroke="#b5b5b5" stroke-width="1"/><text x="1471.0" y="604.7" text-anchor="middle" font-size="9" font-weight="bold" fill="#555">73</text>
<rect x="1445" y="482" width="23" height="15" rx="3" fill="#f7f7f7" stroke="#b5b5b5" stroke-width="1"/><text x="1456.5" y="492.7" text-anchor="middle" font-size="9" font-weight="bold" fill="#555">8</text>
<rect x="1236" y="260" width="19" height="11" rx="3" fill="#f7f7f7" stroke="#b5b5b5" stroke-width="1"/><text x="1245.5" y="268.7" text-anchor="middle" font-size="9" font-weight="bold" fill="#555">8</text>
<rect x="1262" y="200" width="17" height="10" rx="3" fill="#f7f7f7" stroke="#b5b5b5" stroke-width="1"/><text x="1270.5" y="208.2" text-anchor="middle" font-size="9" font-weight="bold" fill="#555">8</text>
<rect x="1294" y="185" width="17" height="10" rx="3" fill="#f7f7f7" stroke="#b5b5b5" stroke-width="1"/><text x="1302.5" y="193.2" text-anchor="middle" font-size="9" font-weight="bold" fill="#555">8</text>
<path d="M1148 235 Q1157.5 231 1167 235 L1167 241.6 Q1167 245 1157.5 248 Q1148 245 1148 241.6Z" fill="#fafafa" stroke="#b5b5b5" stroke-width="1"/><text x="1157.5" y="243.2" text-anchor="middle" font-size="7.5" font-weight="bold" fill="#555">202</text>
<path d="M1328 210 Q1337.0 206 1346 210 L1346 216.6 Q1346 220 1337.0 223 Q1328 220 1328 216.6Z" fill="#fafafa" stroke="#b5b5b5" stroke-width="1"/><text x="1337.0" y="218.2" text-anchor="middle" font-size="7.5" font-weight="bold" fill="#555">202</text>
<path d="M1531 210 Q1540.0 206 1549 210 L1549 216.6 Q1549 220 1540.0 223 Q1531 220 1531 216.6Z" fill="#fafafa" stroke="#b5b5b5" stroke-width="1"/><text x="1540.0" y="218.2" text-anchor="middle" font-size="7.5" font-weight="bold" fill="#555">202</text>
<text x="1020.5" y="212.8" font-size="12.5" font-weight="normal" fill="none" stroke="#f4f4f4" stroke-width="2.5" stroke-linejoin="round" textLength="41" lengthAdjust="spacingAndGlyphs">Goshen</text><text x="1020.5" y="212.8" font-size="12.5" font-weight="normal" fill="#7b7b7b" textLength="41" lengthAdjust="spacingAndGlyphs">Goshen</text>
<text x="1047" y="274.6" font-size="14" font-weight="normal" fill="none" stroke="#f4f4f4" stroke-width="2.5" stroke-linejoin="round" textLength="52" lengthAdjust="spacingAndGlyphs">Litchfield</text><text x="1047" y="274.6" font-size="14" font-weight="normal" fill="#7b7b7b" textLength="52" lengthAdjust="spacingAndGlyphs">Litchfield</text>
<text x="994" y="345.5" font-size="14.5" font-weight="normal" fill="none" stroke="#f4f4f4" stroke-width="2.5" stroke-linejoin="round" textLength="42" lengthAdjust="spacingAndGlyphs">Morris</text><text x="994" y="345.5" font-size="14.5" font-weight="normal" fill="#7b7b7b" textLength="42" lengthAdjust="spacingAndGlyphs">Morris</text>
<text x="922" y="403.5" font-size="14.5" font-weight="normal" fill="none" stroke="#f4f4f4" stroke-width="2.5" stroke-linejoin="round" textLength="71" lengthAdjust="spacingAndGlyphs">Bethlehem</text><text x="922" y="403.5" font-size="14.5" font-weight="normal" fill="#7b7b7b" textLength="71" lengthAdjust="spacingAndGlyphs">Bethlehem</text>
<text x="922" y="298.5" font-size="14.5" font-weight="normal" fill="none" stroke="#f4f4f4" stroke-width="2.5" stroke-linejoin="round" textLength="17" lengthAdjust="spacingAndGlyphs">am</text><text x="922" y="298.5" font-size="14.5" font-weight="normal" fill="#7b7b7b" textLength="17" lengthAdjust="spacingAndGlyphs">am</text>
<text x="1237.5" y="225.5" font-size="13.5" font-weight="normal" fill="none" stroke="#f4f4f4" stroke-width="2.5" stroke-linejoin="round" textLength="56.5" lengthAdjust="spacingAndGlyphs">Torrington</text><text x="1237.5" y="225.5" font-size="13.5" font-weight="normal" fill="#7b7b7b" textLength="56.5" lengthAdjust="spacingAndGlyphs">Torrington</text>
<text x="1328" y="253.8" font-size="13.5" font-weight="normal" fill="none" stroke="#f4f4f4" stroke-width="2.5" stroke-linejoin="round" textLength="59" lengthAdjust="spacingAndGlyphs">Harwinton</text><text x="1328" y="253.8" font-size="13.5" font-weight="normal" fill="#7b7b7b" textLength="59" lengthAdjust="spacingAndGlyphs">Harwinton</text>
<text x="1330" y="361" font-size="14" font-weight="normal" fill="none" stroke="#f4f4f4" stroke-width="2.5" stroke-linejoin="round" textLength="75" lengthAdjust="spacingAndGlyphs">Thomaston</text><text x="1330" y="361" font-size="14" font-weight="normal" fill="#7b7b7b" textLength="75" lengthAdjust="spacingAndGlyphs">Thomaston</text>
<text x="1195" y="502" font-size="17" font-weight="normal" fill="none" stroke="#f4f4f4" stroke-width="2.5" stroke-linejoin="round" textLength="82" lengthAdjust="spacingAndGlyphs">Watertown</text><text x="1195" y="502" font-size="17" font-weight="normal" fill="#6f6f6f" textLength="82" lengthAdjust="spacingAndGlyphs">Watertown</text>
<text x="1344.5" y="557.7" font-size="17" font-weight="normal" fill="none" stroke="#f4f4f4" stroke-width="2.5" stroke-linejoin="round" textLength="61.5" lengthAdjust="spacingAndGlyphs">Oakville</text><text x="1344.5" y="557.7" font-size="17" font-weight="normal" fill="#6f6f6f" textLength="61.5" lengthAdjust="spacingAndGlyphs">Oakville</text>
<text x="942" y="313" font-size="9.5" font-weight="normal" fill="none" stroke="#f4f4f4" stroke-width="2.5" stroke-linejoin="round" textLength="31" lengthAdjust="spacingAndGlyphs" font-style="italic">Bantam</text><text x="942" y="313" font-size="9.5" font-weight="normal" fill="#8c8c8c" textLength="31" lengthAdjust="spacingAndGlyphs" font-style="italic">Bantam</text>
<text x="948" y="324" font-size="9.5" font-weight="normal" fill="none" stroke="#f4f4f4" stroke-width="2.5" stroke-linejoin="round" textLength="19" lengthAdjust="spacingAndGlyphs" font-style="italic">Lake</text><text x="948" y="324" font-size="9.5" font-weight="normal" fill="#8c8c8c" textLength="19" lengthAdjust="spacingAndGlyphs" font-style="italic">Lake</text>
<text x="941" y="205.6" font-size="7.5" font-weight="bold" fill="none" stroke="#f4f4f4" stroke-width="2.5" stroke-linejoin="round" textLength="42" lengthAdjust="spacingAndGlyphs">TYLER LAKE</text><text x="941" y="205.6" font-size="7.5" font-weight="bold" fill="#7d7d7d" textLength="42" lengthAdjust="spacingAndGlyphs">TYLER LAKE</text>
<text x="947" y="213.5" font-size="7.5" font-weight="bold" fill="none" stroke="#f4f4f4" stroke-width="2.5" stroke-linejoin="round" textLength="30" lengthAdjust="spacingAndGlyphs">HEIGHTS</text><text x="947" y="213.5" font-size="7.5" font-weight="bold" fill="#7d7d7d" textLength="30" lengthAdjust="spacingAndGlyphs">HEIGHTS</text>
<text x="922" y="191.5" font-size="7.5" font-weight="bold" fill="none" stroke="#f4f4f4" stroke-width="2.5" stroke-linejoin="round" textLength="20" lengthAdjust="spacingAndGlyphs">WALL</text><text x="922" y="191.5" font-size="7.5" font-weight="bold" fill="#7d7d7d" textLength="20" lengthAdjust="spacingAndGlyphs">WALL</text>
<text x="1060" y="189" font-size="7.5" font-weight="bold" fill="none" stroke="#f4f4f4" stroke-width="2.5" stroke-linejoin="round" textLength="50" lengthAdjust="spacingAndGlyphs">KELLY CORNER</text><text x="1060" y="189" font-size="7.5" font-weight="bold" fill="#7d7d7d" textLength="50" lengthAdjust="spacingAndGlyphs">KELLY CORNER</text>
<text x="1151.6" y="192.6" font-size="7.5" font-weight="bold" fill="none" stroke="#f4f4f4" stroke-width="2.5" stroke-linejoin="round" textLength="41.5" lengthAdjust="spacingAndGlyphs">DRAKEVILLE</text><text x="1151.6" y="192.6" font-size="7.5" font-weight="bold" fill="#7d7d7d" textLength="41.5" lengthAdjust="spacingAndGlyphs">DRAKEVILLE</text>
<text x="1197.8" y="198" font-size="7.5" font-weight="bold" fill="none" stroke="#f4f4f4" stroke-width="2.5" stroke-linejoin="round" textLength="34" lengthAdjust="spacingAndGlyphs">NEWFIELD</text><text x="1197.8" y="198" font-size="7.5" font-weight="bold" fill="#7d7d7d" textLength="34" lengthAdjust="spacingAndGlyphs">NEWFIELD</text>
<text x="1153" y="219.7" font-size="8" font-weight="bold" fill="none" stroke="#f4f4f4" stroke-width="2.5" stroke-linejoin="round" textLength="68" lengthAdjust="spacingAndGlyphs">WEST TORRINGTON</text><text x="1153" y="219.7" font-size="8" font-weight="bold" fill="#7d7d7d" textLength="68" lengthAdjust="spacingAndGlyphs">WEST TORRINGTON</text>
<text x="1242.5" y="282.8" font-size="7.5" font-weight="bold" fill="none" stroke="#f4f4f4" stroke-width="2.5" stroke-linejoin="round" textLength="44" lengthAdjust="spacingAndGlyphs">CAMPVILLE</text><text x="1242.5" y="282.8" font-size="7.5" font-weight="bold" fill="#7d7d7d" textLength="44" lengthAdjust="spacingAndGlyphs">CAMPVILLE</text>
<text x="1241" y="327" font-size="7.5" font-weight="bold" fill="none" stroke="#f4f4f4" stroke-width="2.5" stroke-linejoin="round" textLength="51" lengthAdjust="spacingAndGlyphs">NORTHFIELD</text><text x="1241" y="327" font-size="7.5" font-weight="bold" fill="#7d7d7d" textLength="51" lengthAdjust="spacingAndGlyphs">NORTHFIELD</text>
<text x="1499" y="467" font-size="7.5" font-weight="bold" fill="none" stroke="#f4f4f4" stroke-width="2.5" stroke-linejoin="round" textLength="42" lengthAdjust="spacingAndGlyphs">GREYSTO</text><text x="1499" y="467" font-size="7.5" font-weight="bold" fill="#7d7d7d" textLength="42" lengthAdjust="spacingAndGlyphs">GREYSTO</text>
<text x="1497.7" y="527.7" font-size="7.5" font-weight="bold" fill="none" stroke="#f4f4f4" stroke-width="2.5" stroke-linejoin="round" textLength="43.3" lengthAdjust="spacingAndGlyphs">WATERV</text><text x="1497.7" y="527.7" font-size="7.5" font-weight="bold" fill="#7d7d7d" textLength="43.3" lengthAdjust="spacingAndGlyphs">WATERV</text>
<text x="1417.6" y="647" font-size="10" font-weight="bold" fill="none" stroke="#f4f4f4" stroke-width="2.5" stroke-linejoin="round" textLength="73.4" lengthAdjust="spacingAndGlyphs">BUNKER HILL</text><text x="1417.6" y="647" font-size="10" font-weight="bold" fill="#7d7d7d" textLength="73.4" lengthAdjust="spacingAndGlyphs">BUNKER HILL</text>
<text x="1530" y="333" font-size="7.5" font-weight="bold" fill="none" stroke="#f4f4f4" stroke-width="2.5" stroke-linejoin="round" textLength="11" lengthAdjust="spacingAndGlyphs">EAS</text><text x="1530" y="333" font-size="7.5" font-weight="bold" fill="#7d7d7d" textLength="11" lengthAdjust="spacingAndGlyphs">EAS</text>
<text x="1368" y="212" font-size="7.5" font-weight="bold" fill="none" stroke="#f4f4f4" stroke-width="2.5" stroke-linejoin="round" textLength="10" lengthAdjust="spacingAndGlyphs">BA</text><text x="1368" y="212" font-size="7.5" font-weight="bold" fill="#7d7d7d" textLength="10" lengthAdjust="spacingAndGlyphs">BA</text>
<text x="1445" y="194.7" font-size="11" font-weight="normal" fill="none" stroke="#f4f4f4" stroke-width="2.5" stroke-linejoin="round" textLength="35" lengthAdjust="spacingAndGlyphs">Center</text><text x="1445" y="194.7" font-size="11" font-weight="normal" fill="#7b7b7b" textLength="35" lengthAdjust="spacingAndGlyphs">Center</text>
<text x="1525" y="360" font-size="14" font-weight="normal" fill="none" stroke="#f4f4f4" stroke-width="2.5" stroke-linejoin="round" textLength="20" lengthAdjust="spacingAndGlyphs">Terr</text><text x="1525" y="360" font-size="14" font-weight="normal" fill="#7b7b7b" textLength="20" lengthAdjust="spacingAndGlyphs">Terr</text>
<rect x="1377" y="195" width="153" height="37" rx="4" fill="#fff" filter="url(#msh)"/>
<defs><filter id="msh" x="-10%" y="-20%" width="120%" height="150%"><feDropShadow dx="0" dy="1" stdDeviation="1.2" flood-color="#000" flood-opacity="0.18"/></filter></defs>
<rect x="1386" y="204" width="19.5" height="19" rx="1.5" fill="#f2f2f2" stroke="#cfcfcf" stroke-width="0.8"/><rect x="1387" y="205" width="8" height="17" fill="#8f8f8f"/><rect x="1395" y="205" width="9.5" height="17" fill="#e1e1e1"/><path d="M1387 213.5h17" stroke="#fff" stroke-width="0.8"/>
<text x="1415.5" y="218.3" font-size="13.5" fill="#1f1f1f" textLength="97" lengthAdjust="spacingAndGlyphs">Grayscale (Light)</text>
<rect x="1495" y="237" width="35" height="33" fill="#fff" filter="url(#msh)"/>
<rect x="1495" y="271" width="35" height="34" fill="#fff" filter="url(#msh)"/>
<rect x="1495" y="310" width="35" height="34" fill="#fff" filter="url(#msh)"/>
<rect x="1495" y="349" width="35" height="34" fill="#fff" filter="url(#msh)"/>
<path d="M1505.5 254h14M1512.5 247v14" stroke="#555" stroke-width="1.6"/>
<path d="M1505.5 288.5h14" stroke="#555" stroke-width="1.6"/>
<path d="M1506 331.5h14l-2.6-8.5h-8.8z" fill="#6d6d6d"/>
<path d="M1513 356.5l4.2 9-4.2 9-4.2-9z" fill="#707070"/><path d="M1513 360l2 5.5-2 5.5-2-5.5z" fill="#8a8a8a"/>
<rect x="933" y="732" width="7.3" height="6.5" fill="#f25022"/><rect x="941" y="732" width="7.3" height="6.5" fill="#7fba00"/><rect x="933" y="739" width="7.3" height="6.5" fill="#00a4ef"/><rect x="941" y="739" width="7.3" height="6.5" fill="#ffb900"/>
<text x="953" y="743.8" font-size="12.5" fill="#595959" textLength="88" lengthAdjust="spacingAndGlyphs">Microsoft Azure</text>
<text x="1417" y="744.5" font-size="9.8" fill="#333" textLength="68.5" lengthAdjust="spacingAndGlyphs">©2025 TomTom</text>
<text x="1490" y="744.5" font-size="9.8" fill="#333" textLength="40" lengthAdjust="spacingAndGlyphs">Feedback</text>
<path d="M1490 747.5h40" stroke="#333" stroke-width="0.8"/>
</svg>
<!--END MAP-->
</body></html>
